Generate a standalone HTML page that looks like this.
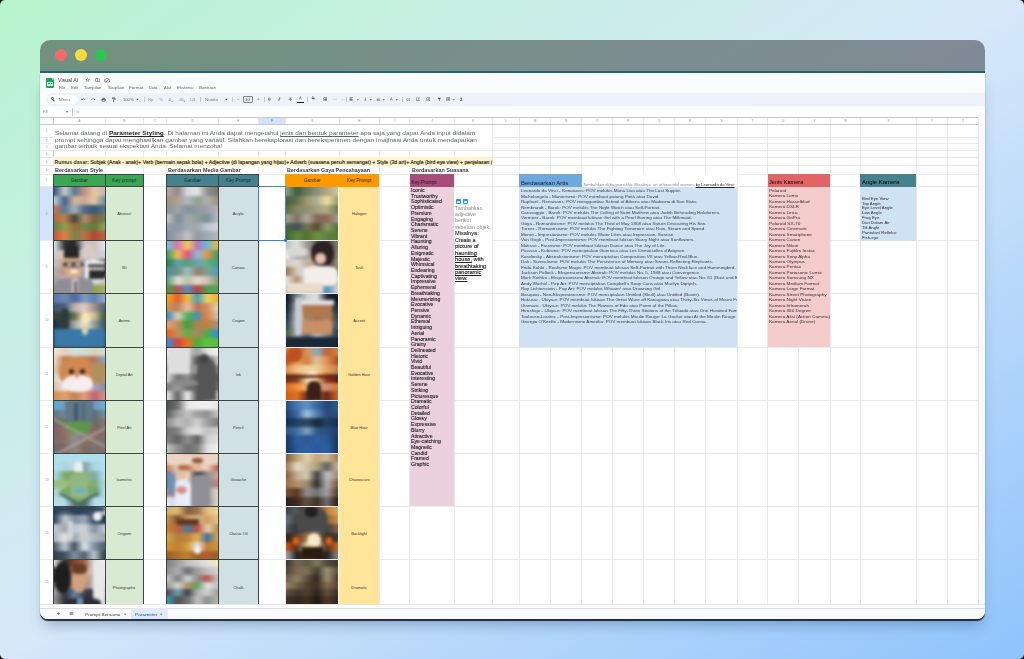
<!DOCTYPE html><html><head><meta charset="utf-8"><style>
*{margin:0;padding:0;box-sizing:border-box}
html,body{width:1024px;height:659px;overflow:hidden;background:#000}
#bg{position:absolute;left:0;top:0;width:1024px;height:659px;border-radius:5px;overflow:hidden;
 background:linear-gradient(to bottom right,#b8f5cf 0%,#d6e8f9 50%,#8fc3fc 100%)}
#bg div{position:absolute}
.t{font-family:"Liberation Sans", sans-serif;white-space:nowrap;position:absolute}
</style></head><body><div id="bg"><div style="left:40.00px;top:73.00px;width:945.00px;height:545.60px;border-radius:0 0 8px 8px;box-shadow:0 1.5px 0.8px rgba(20,30,45,.9),0 10px 14px -4px rgba(40,70,110,.35);background:#fff;overflow:hidden"></div><div style="left:40.00px;top:40.00px;width:945.00px;height:31.00px;border-radius:10px 10px 0 0;background:rgba(0,0,0,.4)"></div><div style="left:40.00px;top:71.00px;width:945.00px;height:2.00px;background:#1f6674"></div><div style="left:55.00px;top:49.20px;width:12.00px;height:12.00px;border-radius:50%;background:#f26b6b"></div><div style="left:75.00px;top:49.20px;width:12.00px;height:12.00px;border-radius:50%;background:#fcd93f"></div><div style="left:95.00px;top:49.20px;width:12.00px;height:12.00px;border-radius:50%;background:#2bc64f"></div><div style="left:40.00px;top:73.00px;width:945.00px;height:20.10px;background:#f9fbfd"></div><div style="left:40.00px;top:105.40px;width:945.00px;height:11.90px;background:linear-gradient(#f6f9fd,#fff 45%)"></div><div style="left:40.00px;top:117.30px;width:945.00px;height:7.30px;background:#fff"></div><div style="left:40.00px;top:117.30px;width:13.30px;height:7.30px;background:#f8f9fa"></div><div style="left:258.40px;top:117.30px;width:26.90px;height:7.30px;background:#d3e3fd"></div><div style="left:40.00px;top:124.60px;width:13.30px;height:479.00px;background:#fff"></div><div style="left:40.00px;top:186.50px;width:13.30px;height:54.10px;background:#d3e3fd"></div><div style="left:52.80px;top:117.30px;width:1.00px;height:486.30px;background:#eaeaea"></div><div style="left:104.60px;top:117.30px;width:1.00px;height:486.30px;background:#eaeaea"></div><div style="left:143.00px;top:117.30px;width:1.00px;height:486.30px;background:#eaeaea"></div><div style="left:166.10px;top:117.30px;width:1.00px;height:486.30px;background:#eaeaea"></div><div style="left:217.90px;top:117.30px;width:1.00px;height:486.30px;background:#eaeaea"></div><div style="left:257.90px;top:117.30px;width:1.00px;height:486.30px;background:#eaeaea"></div><div style="left:284.80px;top:117.30px;width:1.00px;height:486.30px;background:#eaeaea"></div><div style="left:338.50px;top:117.30px;width:1.00px;height:486.30px;background:#eaeaea"></div><div style="left:378.80px;top:117.30px;width:1.00px;height:486.30px;background:#eaeaea"></div><div style="left:409.40px;top:117.30px;width:1.00px;height:486.30px;background:#eaeaea"></div><div style="left:453.50px;top:117.30px;width:1.00px;height:486.30px;background:#eaeaea"></div><div style="left:491.90px;top:117.30px;width:1.00px;height:486.30px;background:#eaeaea"></div><div style="left:518.90px;top:117.30px;width:1.00px;height:486.30px;background:#eaeaea"></div><div style="left:550.10px;top:117.30px;width:1.00px;height:486.30px;background:#eaeaea"></div><div style="left:581.10px;top:117.30px;width:1.00px;height:486.30px;background:#eaeaea"></div><div style="left:612.30px;top:117.30px;width:1.00px;height:486.30px;background:#eaeaea"></div><div style="left:643.30px;top:117.30px;width:1.00px;height:486.30px;background:#eaeaea"></div><div style="left:674.00px;top:117.30px;width:1.00px;height:486.30px;background:#eaeaea"></div><div style="left:705.00px;top:117.30px;width:1.00px;height:486.30px;background:#eaeaea"></div><div style="left:736.80px;top:117.30px;width:1.00px;height:486.30px;background:#eaeaea"></div><div style="left:767.10px;top:117.30px;width:1.00px;height:486.30px;background:#eaeaea"></div><div style="left:798.10px;top:117.30px;width:1.00px;height:486.30px;background:#eaeaea"></div><div style="left:829.80px;top:117.30px;width:1.00px;height:486.30px;background:#eaeaea"></div><div style="left:859.90px;top:117.30px;width:1.00px;height:486.30px;background:#eaeaea"></div><div style="left:916.00px;top:117.30px;width:1.00px;height:486.30px;background:#eaeaea"></div><div style="left:947.00px;top:117.30px;width:1.00px;height:486.30px;background:#eaeaea"></div><div style="left:977.70px;top:117.30px;width:1.00px;height:486.30px;background:#eaeaea"></div><div style="left:40.00px;top:116.80px;width:938.20px;height:1.00px;background:#eaeaea"></div><div style="left:40.00px;top:124.10px;width:938.20px;height:1.00px;background:#eaeaea"></div><div style="left:40.00px;top:137.10px;width:938.20px;height:1.00px;background:#eaeaea"></div><div style="left:40.00px;top:143.10px;width:938.20px;height:1.00px;background:#eaeaea"></div><div style="left:40.00px;top:150.00px;width:938.20px;height:1.00px;background:#eaeaea"></div><div style="left:40.00px;top:156.80px;width:938.20px;height:1.00px;background:#eaeaea"></div><div style="left:40.00px;top:165.30px;width:938.20px;height:1.00px;background:#eaeaea"></div><div style="left:40.00px;top:173.50px;width:938.20px;height:1.00px;background:#eaeaea"></div><div style="left:40.00px;top:186.00px;width:938.20px;height:1.00px;background:#eaeaea"></div><div style="left:40.00px;top:240.10px;width:938.20px;height:1.00px;background:#eaeaea"></div><div style="left:40.00px;top:293.00px;width:938.20px;height:1.00px;background:#eaeaea"></div><div style="left:40.00px;top:346.60px;width:938.20px;height:1.00px;background:#eaeaea"></div><div style="left:40.00px;top:399.80px;width:938.20px;height:1.00px;background:#eaeaea"></div><div style="left:40.00px;top:452.50px;width:938.20px;height:1.00px;background:#eaeaea"></div><div style="left:40.00px;top:505.50px;width:938.20px;height:1.00px;background:#eaeaea"></div><div style="left:40.00px;top:559.10px;width:938.20px;height:1.00px;background:#eaeaea"></div><div style="left:40.00px;top:116.80px;width:938.20px;height:1.00px;background:#c7c7c7"></div><div style="left:40.00px;top:124.10px;width:938.20px;height:1.00px;background:#c7c7c7"></div><div style="left:52.80px;top:117.30px;width:1.00px;height:486.30px;background:#c7c7c7"></div><div class="t" style="left:53.30px;top:118.90px;width:51.80px;text-align:center;font-size:3.0px;line-height:4px;color:#8a8a8a">A</div><div class="t" style="left:105.10px;top:118.90px;width:38.40px;text-align:center;font-size:3.0px;line-height:4px;color:#8a8a8a">B</div><div class="t" style="left:143.50px;top:118.90px;width:23.10px;text-align:center;font-size:3.0px;line-height:4px;color:#8a8a8a">C</div><div class="t" style="left:166.60px;top:118.90px;width:51.80px;text-align:center;font-size:3.0px;line-height:4px;color:#8a8a8a">D</div><div class="t" style="left:218.40px;top:118.90px;width:40.00px;text-align:center;font-size:3.0px;line-height:4px;color:#8a8a8a">E</div><div class="t" style="left:258.40px;top:118.90px;width:26.90px;text-align:center;font-size:3.0px;line-height:4px;color:#0b57d0">F</div><div class="t" style="left:285.30px;top:118.90px;width:53.70px;text-align:center;font-size:3.0px;line-height:4px;color:#8a8a8a">G</div><div class="t" style="left:339.00px;top:118.90px;width:40.30px;text-align:center;font-size:3.0px;line-height:4px;color:#8a8a8a">H</div><div class="t" style="left:379.30px;top:118.90px;width:30.60px;text-align:center;font-size:3.0px;line-height:4px;color:#8a8a8a">I</div><div class="t" style="left:409.90px;top:118.90px;width:44.10px;text-align:center;font-size:3.0px;line-height:4px;color:#8a8a8a">J</div><div class="t" style="left:454.00px;top:118.90px;width:38.40px;text-align:center;font-size:3.0px;line-height:4px;color:#8a8a8a">K</div><div class="t" style="left:492.40px;top:118.90px;width:27.00px;text-align:center;font-size:3.0px;line-height:4px;color:#8a8a8a">L</div><div class="t" style="left:519.40px;top:118.90px;width:31.20px;text-align:center;font-size:3.0px;line-height:4px;color:#8a8a8a">M</div><div class="t" style="left:550.60px;top:118.90px;width:31.00px;text-align:center;font-size:3.0px;line-height:4px;color:#8a8a8a">N</div><div class="t" style="left:581.60px;top:118.90px;width:31.20px;text-align:center;font-size:3.0px;line-height:4px;color:#8a8a8a">O</div><div class="t" style="left:612.80px;top:118.90px;width:31.00px;text-align:center;font-size:3.0px;line-height:4px;color:#8a8a8a">P</div><div class="t" style="left:643.80px;top:118.90px;width:30.70px;text-align:center;font-size:3.0px;line-height:4px;color:#8a8a8a">Q</div><div class="t" style="left:674.50px;top:118.90px;width:31.00px;text-align:center;font-size:3.0px;line-height:4px;color:#8a8a8a">R</div><div class="t" style="left:705.50px;top:118.90px;width:31.80px;text-align:center;font-size:3.0px;line-height:4px;color:#8a8a8a">S</div><div class="t" style="left:737.30px;top:118.90px;width:30.30px;text-align:center;font-size:3.0px;line-height:4px;color:#8a8a8a">T</div><div class="t" style="left:767.60px;top:118.90px;width:31.00px;text-align:center;font-size:3.0px;line-height:4px;color:#8a8a8a">U</div><div class="t" style="left:798.60px;top:118.90px;width:31.70px;text-align:center;font-size:3.0px;line-height:4px;color:#8a8a8a">V</div><div class="t" style="left:830.30px;top:118.90px;width:30.10px;text-align:center;font-size:3.0px;line-height:4px;color:#8a8a8a">W</div><div class="t" style="left:860.40px;top:118.90px;width:56.10px;text-align:center;font-size:3.0px;line-height:4px;color:#8a8a8a">X</div><div class="t" style="left:916.50px;top:118.90px;width:31.00px;text-align:center;font-size:3.0px;line-height:4px;color:#8a8a8a">Y</div><div class="t" style="left:947.50px;top:118.90px;width:30.70px;text-align:center;font-size:3.0px;line-height:4px;color:#8a8a8a">Z</div><div class="t" style="left:40px;top:129.10px;width:13.3px;text-align:center;font-size:3.0px;line-height:4px;color:#8a8a8a">1</div><div class="t" style="left:40px;top:138.60px;width:13.3px;text-align:center;font-size:3.0px;line-height:4px;color:#8a8a8a">2</div><div class="t" style="left:40px;top:145.05px;width:13.3px;text-align:center;font-size:3.0px;line-height:4px;color:#8a8a8a">3</div><div class="t" style="left:40px;top:151.90px;width:13.3px;text-align:center;font-size:3.0px;line-height:4px;color:#8a8a8a">4</div><div class="t" style="left:40px;top:159.55px;width:13.3px;text-align:center;font-size:3.0px;line-height:4px;color:#8a8a8a">5</div><div class="t" style="left:40px;top:167.90px;width:13.3px;text-align:center;font-size:3.0px;line-height:4px;color:#8a8a8a">6</div><div class="t" style="left:40px;top:178.25px;width:13.3px;text-align:center;font-size:3.0px;line-height:4px;color:#8a8a8a">7</div><div class="t" style="left:40px;top:211.55px;width:13.3px;text-align:center;font-size:3.0px;line-height:4px;color:#8a8a8a">8</div><div class="t" style="left:40px;top:265.05px;width:13.3px;text-align:center;font-size:3.0px;line-height:4px;color:#8a8a8a">9</div><div class="t" style="left:40px;top:318.30px;width:13.3px;text-align:center;font-size:3.0px;line-height:4px;color:#8a8a8a">10</div><div class="t" style="left:40px;top:371.70px;width:13.3px;text-align:center;font-size:3.0px;line-height:4px;color:#8a8a8a">11</div><div class="t" style="left:40px;top:424.65px;width:13.3px;text-align:center;font-size:3.0px;line-height:4px;color:#8a8a8a">12</div><div class="t" style="left:40px;top:477.50px;width:13.3px;text-align:center;font-size:3.0px;line-height:4px;color:#8a8a8a">13</div><div class="t" style="left:40px;top:530.80px;width:13.3px;text-align:center;font-size:3.0px;line-height:4px;color:#8a8a8a">14</div><div class="t" style="left:40px;top:579.60px;width:13.3px;text-align:center;font-size:3.0px;line-height:4px;color:#8a8a8a">15</div><div style="left:53.30px;top:124.60px;width:439.10px;height:25.90px;background:#fff;"></div><div style="left:53.30px;top:157.30px;width:439.10px;height:8.50px;background:#fff2cc;"></div><div style="left:53.30px;top:165.80px;width:90.20px;height:8.20px;background:#fff;"></div><div style="left:166.60px;top:165.80px;width:91.80px;height:8.20px;background:#fff;"></div><div style="left:285.30px;top:165.80px;width:94.00px;height:8.20px;background:#fff;"></div><div style="left:409.90px;top:165.80px;width:82.50px;height:8.20px;background:#fff;"></div><div style="left:53.30px;top:174.00px;width:90.20px;height:12.50px;background:#3aa757;"></div><div style="left:105.10px;top:186.50px;width:38.40px;height:426.50px;background:#d9ead3;"></div><div style="left:166.60px;top:174.00px;width:91.80px;height:12.50px;background:#45818e;"></div><div style="left:218.40px;top:186.50px;width:40.00px;height:426.50px;background:#d0e0e3;"></div><div style="left:285.30px;top:174.00px;width:94.00px;height:12.50px;background:#ff9900;"></div><div style="left:339.00px;top:186.50px;width:40.30px;height:426.50px;background:#ffe599;"></div><div style="left:409.90px;top:174.00px;width:44.10px;height:12.50px;background:#a64d79;"></div><div style="left:409.90px;top:186.50px;width:44.10px;height:319.50px;background:#ead1dc;"></div><div style="left:454.00px;top:186.50px;width:38.40px;height:54.10px;background:#fff;"></div><div style="left:519.40px;top:174.00px;width:62.20px;height:12.50px;background:#6fa8dc;"></div><div style="left:581.60px;top:174.00px;width:155.70px;height:12.50px;background:#fff;"></div><div style="left:519.40px;top:186.50px;width:217.90px;height:160.60px;background:#cfe2f3;"></div><div style="left:767.60px;top:174.00px;width:62.70px;height:12.50px;background:#e06666;"></div><div style="left:767.60px;top:186.50px;width:62.70px;height:160.60px;background:#f4cccc;"></div><div style="left:860.40px;top:174.00px;width:56.10px;height:12.50px;background:#45818e;"></div><div style="left:860.40px;top:186.50px;width:56.10px;height:54.10px;background:#cfe2f3;"></div><div style="left:52.90px;top:174.00px;width:0.80px;height:429.60px;background:#3d4541"></div><div style="left:104.70px;top:174.00px;width:0.80px;height:429.60px;background:#3d4541"></div><div style="left:143.10px;top:174.00px;width:0.80px;height:429.60px;background:#3d4541"></div><div style="left:53.30px;top:173.60px;width:90.20px;height:0.80px;background:#3d4541"></div><div style="left:53.30px;top:186.10px;width:90.20px;height:0.80px;background:#3d4541"></div><div style="left:53.30px;top:240.20px;width:90.20px;height:0.80px;background:#3d4541"></div><div style="left:53.30px;top:293.10px;width:90.20px;height:0.80px;background:#3d4541"></div><div style="left:53.30px;top:346.70px;width:90.20px;height:0.80px;background:#3d4541"></div><div style="left:53.30px;top:399.90px;width:90.20px;height:0.80px;background:#3d4541"></div><div style="left:53.30px;top:452.60px;width:90.20px;height:0.80px;background:#3d4541"></div><div style="left:53.30px;top:505.60px;width:90.20px;height:0.80px;background:#3d4541"></div><div style="left:53.30px;top:559.20px;width:90.20px;height:0.80px;background:#3d4541"></div><div style="left:166.20px;top:174.00px;width:0.80px;height:429.60px;background:#3d4541"></div><div style="left:218.00px;top:174.00px;width:0.80px;height:429.60px;background:#3d4541"></div><div style="left:258.00px;top:174.00px;width:0.80px;height:429.60px;background:#3d4541"></div><div style="left:166.60px;top:173.60px;width:91.80px;height:0.80px;background:#3d4541"></div><div style="left:166.60px;top:186.10px;width:91.80px;height:0.80px;background:#3d4541"></div><div style="left:166.60px;top:240.20px;width:91.80px;height:0.80px;background:#3d4541"></div><div style="left:166.60px;top:293.10px;width:91.80px;height:0.80px;background:#3d4541"></div><div style="left:166.60px;top:346.70px;width:91.80px;height:0.80px;background:#3d4541"></div><div style="left:166.60px;top:399.90px;width:91.80px;height:0.80px;background:#3d4541"></div><div style="left:166.60px;top:452.60px;width:91.80px;height:0.80px;background:#3d4541"></div><div style="left:166.60px;top:505.60px;width:91.80px;height:0.80px;background:#3d4541"></div><div style="left:166.60px;top:559.20px;width:91.80px;height:0.80px;background:#3d4541"></div><div style="left:53.80px;top:187.10px;width:50.80px;height:53.20px;overflow:hidden"><div style="left:0;top:0;width:50.80px;height:53.20px;filter:blur(1.6px)"><div style="left:-4px;top:-4.00px;width:58.80px;height:13.37px;background:linear-gradient(to right,#3a5a80 4px,#3a5a80 8.3%,#c8ccd0 25.0%,#5a7890 41.7%,#c09080 58.3%,#e8c8a0 75.0%,#c8b8a8 91.7%,#c8b8a8 calc(100% - 4px))"></div><div style="left:-4px;top:8.87px;width:58.80px;height:9.37px;background:linear-gradient(to right,#c0c8d0 4px,#c0c8d0 8.3%,#40608a 25.0%,#d0b8a0 41.7%,#c8a890 58.3%,#e0c8a8 75.0%,#7890a0 91.7%,#7890a0 calc(100% - 4px))"></div><div style="left:-4px;top:17.73px;width:58.80px;height:9.37px;background:linear-gradient(to right,#c07850 4px,#c07850 8.3%,#5a7898 25.0%,#a8b0b8 41.7%,#506888 58.3%,#385878 75.0%,#5a7080 91.7%,#5a7080 calc(100% - 4px))"></div><div style="left:-4px;top:26.60px;width:58.80px;height:9.37px;background:linear-gradient(to right,#a87040 4px,#a87040 8.3%,#c08050 25.0%,#404838 41.7%,#b09070 58.3%,#806040 75.0%,#708050 91.7%,#708050 calc(100% - 4px))"></div><div style="left:-4px;top:35.47px;width:58.80px;height:9.37px;background:linear-gradient(to right,#6a8040 4px,#6a8040 8.3%,#90a050 25.0%,#a06838 41.7%,#708848 58.3%,#607838 75.0%,#90a060 91.7%,#90a060 calc(100% - 4px))"></div><div style="left:-4px;top:44.33px;width:58.80px;height:13.37px;background:linear-gradient(to right,#c85830 4px,#c85830 8.3%,#e08040 25.0%,#708850 41.7%,#c07040 58.3%,#b04830 75.0%,#c06040 91.7%,#c06040 calc(100% - 4px))"></div></div></div><div style="left:53.80px;top:241.20px;width:50.80px;height:52.00px;overflow:hidden"><div style="left:0;top:0;width:50.80px;height:52.00px;filter:blur(1.6px)"><div style="left:-4px;top:-4.00px;width:58.80px;height:13.17px;background:linear-gradient(to right,#d8e0ec 4px,#d8e0ec 8.3%,#303030 25.0%,#282828 41.7%,#c8c8d0 58.3%,#d0c0b0 75.0%,#e0e4f0 91.7%,#e0e4f0 calc(100% - 4px))"></div><div style="left:-4px;top:8.67px;width:58.80px;height:9.17px;background:linear-gradient(to right,#c8ccd8 4px,#c8ccd8 8.3%,#e0c0a0 25.0%,#c8b0a0 41.7%,#c0c0c8 58.3%,#c8c8d0 75.0%,#d0d0d8 91.7%,#d0d0d8 calc(100% - 4px))"></div><div style="left:-4px;top:17.33px;width:58.80px;height:9.17px;background:linear-gradient(to right,#c0c0c8 4px,#c0c0c8 8.3%,#d0a080 25.0%,#c89070 41.7%,#a8a8b0 58.3%,#e8e8e8 75.0%,#404040 91.7%,#404040 calc(100% - 4px))"></div><div style="left:-4px;top:26.00px;width:58.80px;height:9.17px;background:linear-gradient(to right,#b0b0b8 4px,#b0b0b8 8.3%,#c89078 25.0%,#d0a080 41.7%,#a0a0a8 58.3%,#f0f0f0 75.0%,#303030 91.7%,#303030 calc(100% - 4px))"></div><div style="left:-4px;top:34.67px;width:58.80px;height:9.17px;background:linear-gradient(to right,#a0a0a8 4px,#a0a0a8 8.3%,#b8b8c0 25.0%,#c0b8c0 41.7%,#9a9aa0 58.3%,#d0d0d0 75.0%,#c0c0c0 91.7%,#c0c0c0 calc(100% - 4px))"></div><div style="left:-4px;top:43.33px;width:58.80px;height:13.17px;background:linear-gradient(to right,#8a8a90 4px,#8a8a90 8.3%,#a0a0a8 25.0%,#806870 41.7%,#a0a0a0 58.3%,#90a050 75.0%,#a0b060 91.7%,#a0b060 calc(100% - 4px))"></div><div style="left:27.94px;top:4.16px;width:13.72px;height:12.48px;background:#d8ccc0;border-radius:50% 50% 0 0;"></div><div style="left:31.50px;top:19.76px;width:19.30px;height:19.76px;background:#f2f2f2;border-radius:1px;"></div><div style="left:35.56px;top:29.12px;width:15.24px;height:8.32px;background:#2a2a2a;border-radius:0;"></div><div style="left:34.54px;top:22.88px;width:16.26px;height:4.16px;background:#555;border-radius:0;"></div><div style="left:2.03px;top:36.40px;width:37.59px;height:15.60px;background:#8e8e94;border-radius:30% 30% 0 0;"></div><div style="left:18.29px;top:37.44px;width:6.10px;height:14.56px;background:#d8d8e0;border-radius:0;"></div><div style="left:20.32px;top:39.52px;width:2.54px;height:12.48px;background:#7a6068;border-radius:0;"></div><div style="left:10.16px;top:15.60px;width:19.30px;height:20.80px;background:#d8a888;border-radius:45%;"></div><div style="left:10.16px;top:4.16px;width:15.24px;height:12.48px;background:#262626;border-radius:35% 35% 5% 5%;"></div><div style="left:9.14px;top:20.80px;width:21.34px;height:5.20px;background:#3a3a3a;border-radius:30%;"></div><div style="left:13.21px;top:21.84px;width:5.08px;height:3.12px;background:#c8c8d0;border-radius:30%;"></div><div style="left:21.34px;top:21.84px;width:6.10px;height:3.12px;background:#c8c8d0;border-radius:30%;"></div><div style="left:16.26px;top:29.12px;width:8.13px;height:2.60px;background:#fafafa;border-radius:30%;"></div></div></div><div style="left:53.80px;top:294.10px;width:50.80px;height:52.70px;overflow:hidden"><div style="left:0;top:0;width:50.80px;height:52.70px;filter:blur(1.6px)"><div style="left:-4px;top:-4.00px;width:58.80px;height:13.28px;background:linear-gradient(to right,#5878a8 4px,#5878a8 8.3%,#7088b0 25.0%,#506898 41.7%,#8098c0 58.3%,#6080b0 75.0%,#90a8c8 91.7%,#90a8c8 calc(100% - 4px))"></div><div style="left:-4px;top:8.78px;width:58.80px;height:9.28px;background:linear-gradient(to right,#405870 4px,#405870 8.3%,#4a6080 25.0%,#c0b0b0 41.7%,#e0d0c0 58.3%,#a09090 75.0%,#506070 91.7%,#506070 calc(100% - 4px))"></div><div style="left:-4px;top:17.57px;width:58.80px;height:9.28px;background:linear-gradient(to right,#304830 4px,#304830 8.3%,#383838 25.0%,#607050 41.7%,#f0e0b0 58.3%,#d0c090 75.0%,#406040 91.7%,#406040 calc(100% - 4px))"></div><div style="left:-4px;top:26.35px;width:58.80px;height:9.28px;background:linear-gradient(to right,#203040 4px,#203040 8.3%,#404850 25.0%,#a0a8a0 41.7%,#f0e8c0 58.3%,#90a0a0 75.0%,#405860 91.7%,#405860 calc(100% - 4px))"></div><div style="left:-4px;top:35.13px;width:58.80px;height:9.28px;background:linear-gradient(to right,#204868 4px,#204868 8.3%,#3878a0 25.0%,#70a0c0 41.7%,#a0c0d0 58.3%,#4080a8 75.0%,#305878 91.7%,#305878 calc(100% - 4px))"></div><div style="left:-4px;top:43.92px;width:58.80px;height:13.28px;background:linear-gradient(to right,#1a3a58 4px,#1a3a58 8.3%,#2a5a80 25.0%,#306890 41.7%,#2a6088 58.3%,#306890 75.0%,#204868 91.7%,#204868 calc(100% - 4px))"></div><div style="left:27.43px;top:18.97px;width:9.14px;height:10.54px;background:#f4e4b8;border-radius:50%;"></div><div style="left:7.11px;top:13.70px;width:8.13px;height:23.19px;background:#2e3a3a;border-radius:30%;"></div><div style="left:0.00px;top:34.78px;width:50.80px;height:17.92px;background:#3a78a8;border-radius:0;"></div><div style="left:28.45px;top:30.57px;width:6.10px;height:10.54px;background:#d8d0b0;border-radius:40%;"></div></div></div><div style="left:53.80px;top:347.70px;width:50.80px;height:52.30px;overflow:hidden"><div style="left:0;top:0;width:50.80px;height:52.30px;filter:blur(1.6px)"><div style="left:-4px;top:-4.00px;width:58.80px;height:13.22px;background:linear-gradient(to right,#f0e0d0 4px,#f0e0d0 8.3%,#e8d0c0 25.0%,#d0e0d8 41.7%,#c8e0d8 58.3%,#e0d0b0 75.0%,#c8e0d8 91.7%,#c8e0d8 calc(100% - 4px))"></div><div style="left:-4px;top:8.72px;width:58.80px;height:9.22px;background:linear-gradient(to right,#e8d8c8 4px,#e8d8c8 8.3%,#c07848 25.0%,#d09060 41.7%,#c88050 58.3%,#b07858 75.0%,#90a0c0 91.7%,#90a0c0 calc(100% - 4px))"></div><div style="left:-4px;top:17.43px;width:58.80px;height:9.22px;background:linear-gradient(to right,#e0c8b0 4px,#e0c8b0 8.3%,#d09060 25.0%,#402820 41.7%,#d8a078 58.3%,#402820 75.0%,#d09040 91.7%,#d09040 calc(100% - 4px))"></div><div style="left:-4px;top:26.15px;width:58.80px;height:9.22px;background:linear-gradient(to right,#e0d0c0 4px,#e0d0c0 8.3%,#f0f0f0 25.0%,#f0d8d0 41.7%,#f8f0f0 58.3%,#e8e0e0 75.0%,#e09040 91.7%,#e09040 calc(100% - 4px))"></div><div style="left:-4px;top:34.87px;width:58.80px;height:9.22px;background:linear-gradient(to right,#d8c0a8 4px,#d8c0a8 8.3%,#f0e8e8 25.0%,#c89060 41.7%,#f0e0e0 58.3%,#b0a0b0 75.0%,#8090b0 91.7%,#8090b0 calc(100% - 4px))"></div><div style="left:-4px;top:43.58px;width:58.80px;height:13.22px;background:linear-gradient(to right,#d89050 4px,#d89050 8.3%,#e0a070 25.0%,#c08050 41.7%,#e0a080 58.3%,#c06070 75.0%,#d09080 91.7%,#d09080 calc(100% - 4px))"></div><div style="left:5.08px;top:10.46px;width:35.56px;height:28.76px;background:#d08850;border-radius:45%;"></div><div style="left:9.14px;top:27.20px;width:30.48px;height:16.74px;background:#f6eeee;border-radius:45%;"></div><div style="left:15.24px;top:20.92px;width:5.08px;height:5.23px;background:#2a1810;border-radius:50%;"></div><div style="left:26.42px;top:20.92px;width:5.08px;height:5.23px;background:#2a1810;border-radius:50%;"></div><div style="left:21.34px;top:27.20px;width:4.06px;height:3.14px;background:#e08090;border-radius:50%;"></div><div style="left:38.61px;top:15.69px;width:12.19px;height:20.92px;background:#b09060;border-radius:20%;"></div></div></div><div style="left:53.80px;top:400.90px;width:50.80px;height:51.80px;overflow:hidden"><div style="left:0;top:0;width:50.80px;height:51.80px;filter:blur(1.6px)"><div style="left:-4px;top:-4.00px;width:58.80px;height:13.13px;background:linear-gradient(to right,#5aa8d0 4px,#5aa8d0 8.3%,#70a0c0 25.0%,#6088a0 41.7%,#587890 58.3%,#7098b0 75.0%,#68b0d8 91.7%,#68b0d8 calc(100% - 4px))"></div><div style="left:-4px;top:8.63px;width:58.80px;height:9.13px;background:linear-gradient(to right,#607888 4px,#607888 8.3%,#708898 25.0%,#485868 41.7%,#788090 58.3%,#586878 75.0%,#7090a0 91.7%,#7090a0 calc(100% - 4px))"></div><div style="left:-4px;top:17.27px;width:58.80px;height:9.13px;background:linear-gradient(to right,#706860 4px,#706860 8.3%,#608048 25.0%,#70a850 41.7%,#80a860 58.3%,#686860 75.0%,#807870 91.7%,#807870 calc(100% - 4px))"></div><div style="left:-4px;top:25.90px;width:58.80px;height:9.13px;background:linear-gradient(to right,#8a6058 4px,#8a6058 8.3%,#907068 25.0%,#70a058 41.7%,#808878 58.3%,#906058 75.0%,#806868 91.7%,#806868 calc(100% - 4px))"></div><div style="left:-4px;top:34.53px;width:58.80px;height:9.13px;background:linear-gradient(to right,#7a6a68 4px,#7a6a68 8.3%,#8a7060 25.0%,#909090 41.7%,#8a7068 58.3%,#8a6a60 75.0%,#7a7070 91.7%,#7a7070 calc(100% - 4px))"></div><div style="left:-4px;top:43.17px;width:58.80px;height:13.13px;background:linear-gradient(to right,#6a6a70 4px,#6a6a70 8.3%,#806860 25.0%,#8a8a8a 41.7%,#806a60 58.3%,#7a7070 75.0%,#806a68 91.7%,#806a68 calc(100% - 4px))"></div><div style="left:11.18px;top:0.00px;width:28.45px;height:20.72px;background:#607888;border-radius:0;"></div><div style="left:20.32px;top:2.59px;width:4.06px;height:18.13px;background:#455565;border-radius:0;"></div><div style="left:28.45px;top:1.04px;width:3.05px;height:18.65px;background:#506878;border-radius:0;"></div><div style="left:15.24px;top:19.68px;width:21.34px;height:12.43px;background:#5a9848;border-radius:40%;"></div><div style="left:-5.08px;top:40.40px;width:60.96px;height:2.07px;background:#a8a8a8;border-radius:0;transform:rotate(-28deg)"></div><div style="left:-5.08px;top:31.08px;width:60.96px;height:1.55px;background:#a0a0a0;border-radius:0;transform:rotate(28deg)"></div></div></div><div style="left:53.80px;top:453.60px;width:50.80px;height:52.10px;overflow:hidden"><div style="left:0;top:0;width:50.80px;height:52.10px;filter:blur(1.6px)"><div style="left:-4px;top:-4.00px;width:58.80px;height:13.18px;background:linear-gradient(to right,#b0e0ee 4px,#b0e0ee 8.3%,#b0e0ee 25.0%,#b0e0ee 41.7%,#b0e0ee 58.3%,#b0e0ee 75.0%,#b0e0ee 91.7%,#b0e0ee calc(100% - 4px))"></div><div style="left:-4px;top:8.68px;width:58.80px;height:9.18px;background:linear-gradient(to right,#b0e0ee 4px,#b0e0ee 8.3%,#a8d8e0 25.0%,#c0d8e0 41.7%,#80a0a0 58.3%,#a8d8e8 75.0%,#b0e0ee 91.7%,#b0e0ee calc(100% - 4px))"></div><div style="left:-4px;top:17.37px;width:58.80px;height:9.18px;background:linear-gradient(to right,#a8d8e0 4px,#a8d8e0 8.3%,#80a870 25.0%,#78a070 41.7%,#90b880 58.3%,#80a8a0 75.0%,#b0e0ee 91.7%,#b0e0ee calc(100% - 4px))"></div><div style="left:-4px;top:26.05px;width:58.80px;height:9.18px;background:linear-gradient(to right,#90c080 4px,#90c080 8.3%,#a0c080 25.0%,#80a860 41.7%,#a0c070 58.3%,#78a870 75.0%,#a8d8e0 91.7%,#a8d8e0 calc(100% - 4px))"></div><div style="left:-4px;top:34.73px;width:58.80px;height:9.18px;background:linear-gradient(to right,#a8d8e0 4px,#a8d8e0 8.3%,#90b880 25.0%,#a0c0b0 41.7%,#80a860 58.3%,#608070 75.0%,#b0e0ee 91.7%,#b0e0ee calc(100% - 4px))"></div><div style="left:-4px;top:43.42px;width:58.80px;height:13.18px;background:linear-gradient(to right,#b0e0ee 4px,#b0e0ee 8.3%,#b0e0ee 25.0%,#607870 41.7%,#506860 58.3%,#b0e0ee 75.0%,#b0e0ee 91.7%,#b0e0ee calc(100% - 4px))"></div><div style="left:11.18px;top:26.05px;width:28.45px;height:29.18px;background:#4a6a60;border-radius:0;transform:scaleY(0.55) rotate(45deg)"></div><div style="left:11.18px;top:22.92px;width:28.45px;height:29.18px;background:#78a868;border-radius:0;transform:scaleY(0.55) rotate(45deg)"></div><div style="left:16.26px;top:20.84px;width:18.29px;height:23.97px;background:#90b880;border-radius:20%;"></div><div style="left:20.32px;top:7.29px;width:9.14px;height:11.46px;background:#e8f0f0;border-radius:50% 50% 10% 10%;"></div><div style="left:20.32px;top:34.39px;width:11.18px;height:5.21px;background:#70b0c8;border-radius:30%;"></div></div></div><div style="left:53.80px;top:506.60px;width:50.80px;height:52.70px;overflow:hidden"><div style="left:0;top:0;width:50.80px;height:52.70px;filter:blur(1.6px)"><div style="left:-4px;top:-4.00px;width:58.80px;height:13.28px;background:linear-gradient(to right,#2a4058 4px,#2a4058 8.3%,#5a6a80 25.0%,#2a4058 41.7%,#304860 58.3%,#405870 75.0%,#c0c8d0 91.7%,#c0c8d0 calc(100% - 4px))"></div><div style="left:-4px;top:8.78px;width:58.80px;height:9.28px;background:linear-gradient(to right,#304860 4px,#304860 8.3%,#c0c8d0 25.0%,#8090a0 41.7%,#a0a8b8 58.3%,#304860 75.0%,#203850 91.7%,#203850 calc(100% - 4px))"></div><div style="left:-4px;top:17.57px;width:58.80px;height:9.28px;background:linear-gradient(to right,#c0c8d0 4px,#c0c8d0 8.3%,#a0a8b0 25.0%,#c0c8d0 41.7%,#d0d4d8 58.3%,#8090a0 75.0%,#c0c8d0 91.7%,#c0c8d0 calc(100% - 4px))"></div><div style="left:-4px;top:26.35px;width:58.80px;height:9.28px;background:linear-gradient(to right,#b0b8c0 4px,#b0b8c0 8.3%,#e0e4e8 25.0%,#a0a8b0 41.7%,#c0c8d0 58.3%,#b0b8c0 75.0%,#a0a8b0 91.7%,#a0a8b0 calc(100% - 4px))"></div><div style="left:-4px;top:35.13px;width:58.80px;height:9.28px;background:linear-gradient(to right,#506070 4px,#506070 8.3%,#c0c8d0 25.0%,#405060 41.7%,#e0e4e8 58.3%,#8090a0 75.0%,#506070 91.7%,#506070 calc(100% - 4px))"></div><div style="left:-4px;top:43.92px;width:58.80px;height:13.28px;background:linear-gradient(to right,#304050 4px,#304050 8.3%,#405060 25.0%,#8090a0 41.7%,#506070 58.3%,#c0c8d0 75.0%,#304050 91.7%,#304050 calc(100% - 4px))"></div><div style="left:39.62px;top:5.27px;width:8.13px;height:9.49px;background:#f0f0f0;border-radius:50%;"></div><div style="left:0.00px;top:0.00px;width:50.80px;height:4.22px;background:#2a4058;border-radius:0;"></div><div style="left:14.22px;top:14.76px;width:5.08px;height:17.92px;background:#d0d4d8;border-radius:0;"></div><div style="left:25.40px;top:23.72px;width:11.18px;height:13.18px;background:#c8ccd0;border-radius:50%;"></div></div></div><div style="left:53.80px;top:560.20px;width:50.80px;height:43.40px;overflow:hidden"><div style="left:0;top:0;width:50.80px;height:43.40px;filter:blur(1.6px)"><div style="left:-4px;top:-4.00px;width:58.80px;height:11.73px;background:linear-gradient(to right,#d8d8d8 4px,#d8d8d8 8.3%,#303030 25.0%,#804830 41.7%,#a06040 58.3%,#e0e0e0 75.0%,#f0f0f0 91.7%,#f0f0f0 calc(100% - 4px))"></div><div style="left:-4px;top:7.23px;width:58.80px;height:7.73px;background:linear-gradient(to right,#404040 4px,#404040 8.3%,#202020 25.0%,#c09070 41.7%,#d0a080 58.3%,#c8c8c8 75.0%,#f0f0f0 91.7%,#f0f0f0 calc(100% - 4px))"></div><div style="left:-4px;top:14.47px;width:58.80px;height:7.73px;background:linear-gradient(to right,#303030 4px,#303030 8.3%,#606060 25.0%,#d0a080 41.7%,#c89070 58.3%,#b8b8b8 75.0%,#e0e0e0 91.7%,#e0e0e0 calc(100% - 4px))"></div><div style="left:-4px;top:21.70px;width:58.80px;height:7.73px;background:linear-gradient(to right,#808080 4px,#808080 8.3%,#202020 25.0%,#c0a090 41.7%,#a08070 58.3%,#c0c0c0 75.0%,#d0d0d0 91.7%,#d0d0d0 calc(100% - 4px))"></div><div style="left:-4px;top:28.93px;width:58.80px;height:7.73px;background:linear-gradient(to right,#a0a0a0 4px,#a0a0a0 8.3%,#303038 25.0%,#6080a0 41.7%,#404048 58.3%,#303038 75.0%,#b0b0b0 91.7%,#b0b0b0 calc(100% - 4px))"></div><div style="left:-4px;top:36.17px;width:58.80px;height:11.73px;background:linear-gradient(to right,#909090 4px,#909090 8.3%,#303038 25.0%,#6a90b0 41.7%,#303038 58.3%,#282830 75.0%,#a0a0a0 91.7%,#a0a0a0 calc(100% - 4px))"></div><div style="left:0.00px;top:2.11px;width:17.27px;height:30.62px;background:#1e1e1e;border-radius:50%;"></div><div style="left:39.62px;top:2.64px;width:11.18px;height:50.16px;background:#e8e8e8;border-radius:0;"></div><div style="left:18.29px;top:9.50px;width:14.22px;height:23.23px;background:#d0a080;border-radius:45%;"></div><div style="left:18.29px;top:4.22px;width:15.24px;height:9.50px;background:#6a3c24;border-radius:40%;"></div><div style="left:9.14px;top:38.02px;width:37.59px;height:14.78px;background:#2e2e36;border-radius:30% 30% 0 0;"></div><div style="left:23.37px;top:38.02px;width:6.10px;height:14.78px;background:#6890b8;border-radius:0;"></div></div></div><div style="left:167.10px;top:187.10px;width:50.80px;height:53.20px;overflow:hidden"><div style="left:0;top:0;width:50.80px;height:53.20px;filter:blur(1.6px)"><div style="left:-4px;top:-4.00px;width:58.80px;height:13.37px;background:linear-gradient(to right,#b0a8a0 4px,#b0a8a0 8.3%,#908880 25.0%,#d8dce0 41.7%,#e0e4e8 58.3%,#909090 75.0%,#807870 91.7%,#807870 calc(100% - 4px))"></div><div style="left:-4px;top:8.87px;width:58.80px;height:9.37px;background:linear-gradient(to right,#a09080 4px,#a09080 8.3%,#b0a090 25.0%,#b0b8c0 41.7%,#90a090 58.3%,#b0b0b0 75.0%,#a09080 91.7%,#a09080 calc(100% - 4px))"></div><div style="left:-4px;top:17.73px;width:58.80px;height:9.37px;background:linear-gradient(to right,#909098 4px,#909098 8.3%,#a0a4a8 25.0%,#8890a0 41.7%,#9098a0 58.3%,#a0a0a8 75.0%,#b0b0b8 91.7%,#b0b0b8 calc(100% - 4px))"></div><div style="left:-4px;top:26.60px;width:58.80px;height:9.37px;background:linear-gradient(to right,#c0c4c8 4px,#c0c4c8 8.3%,#808890 25.0%,#a0a8b0 41.7%,#90a090 58.3%,#7890a0 75.0%,#b0b8c0 91.7%,#b0b8c0 calc(100% - 4px))"></div><div style="left:-4px;top:35.47px;width:58.80px;height:9.37px;background:linear-gradient(to right,#90a0a0 4px,#90a0a0 8.3%,#8898a8 25.0%,#a0a8b0 41.7%,#a0a8b0 58.3%,#c0c8d0 75.0%,#d0d4d8 91.7%,#d0d4d8 calc(100% - 4px))"></div><div style="left:-4px;top:44.33px;width:58.80px;height:13.37px;background:linear-gradient(to right,#8090a0 4px,#8090a0 8.3%,#a0a0b0 25.0%,#c0c0c0 41.7%,#909aa0 58.3%,#a0a8b0 75.0%,#b0b8c0 91.7%,#b0b8c0 calc(100% - 4px))"></div></div></div><div style="left:167.10px;top:241.20px;width:50.80px;height:52.00px;overflow:hidden"><div style="left:0;top:0;width:50.80px;height:52.00px;filter:blur(1.6px)"><div style="left:-4px;top:-4.00px;width:58.80px;height:13.17px;background:linear-gradient(to right,#70c0d0 4px,#70c0d0 8.3%,#e070b0 25.0%,#f0d050 41.7%,#c070c0 58.3%,#60c0e0 75.0%,#f0b040 91.7%,#f0b040 calc(100% - 4px))"></div><div style="left:-4px;top:8.67px;width:58.80px;height:9.17px;background:linear-gradient(to right,#40a060 4px,#40a060 8.3%,#f0c050 25.0%,#e05080 41.7%,#80c0e0 58.3%,#f09040 75.0%,#40a060 91.7%,#40a060 calc(100% - 4px))"></div><div style="left:-4px;top:17.33px;width:58.80px;height:9.17px;background:linear-gradient(to right,#308050 4px,#308050 8.3%,#60a0b0 25.0%,#50a070 41.7%,#70a0c0 58.3%,#60b080 75.0%,#40a080 91.7%,#40a080 calc(100% - 4px))"></div><div style="left:-4px;top:26.00px;width:58.80px;height:9.17px;background:linear-gradient(to right,#5090a0 4px,#5090a0 8.3%,#709080 25.0%,#a0c0c0 41.7%,#908070 58.3%,#80a090 75.0%,#50a0b0 91.7%,#50a0b0 calc(100% - 4px))"></div><div style="left:-4px;top:34.67px;width:58.80px;height:9.17px;background:linear-gradient(to right,#60a080 4px,#60a080 8.3%,#e0e0d0 25.0%,#c0c0a0 41.7%,#e0d8d0 58.3%,#d0c0b0 75.0%,#80a080 91.7%,#80a080 calc(100% - 4px))"></div><div style="left:-4px;top:43.33px;width:58.80px;height:13.17px;background:linear-gradient(to right,#40a040 4px,#40a040 8.3%,#c05050 25.0%,#5090c0 41.7%,#c04040 58.3%,#50a050 75.0%,#60a050 91.7%,#60a050 calc(100% - 4px))"></div></div></div><div style="left:167.10px;top:294.10px;width:50.80px;height:52.70px;overflow:hidden"><div style="left:0;top:0;width:50.80px;height:52.70px;filter:blur(1.6px)"><div style="left:-4px;top:-4.00px;width:58.80px;height:13.28px;background:linear-gradient(to right,#f0a020 4px,#f0a020 8.3%,#e06030 25.0%,#f0c040 41.7%,#40a0c0 58.3%,#f0d060 75.0%,#f0b030 91.7%,#f0b030 calc(100% - 4px))"></div><div style="left:-4px;top:8.78px;width:58.80px;height:9.28px;background:linear-gradient(to right,#d09050 4px,#d09050 8.3%,#c08060 25.0%,#e0c0a0 41.7%,#c07050 58.3%,#d09060 75.0%,#e0d0b0 91.7%,#e0d0b0 calc(100% - 4px))"></div><div style="left:-4px;top:17.57px;width:58.80px;height:9.28px;background:linear-gradient(to right,#3090c0 4px,#3090c0 8.3%,#e0d0c0 25.0%,#50b050 41.7%,#4090c0 58.3%,#f08030 75.0%,#c0c0c0 91.7%,#c0c0c0 calc(100% - 4px))"></div><div style="left:-4px;top:26.35px;width:58.80px;height:9.28px;background:linear-gradient(to right,#e0a070 4px,#e0a070 8.3%,#c09060 25.0%,#40a040 41.7%,#b08050 58.3%,#c08040 75.0%,#b09070 91.7%,#b09070 calc(100% - 4px))"></div><div style="left:-4px;top:35.13px;width:58.80px;height:9.28px;background:linear-gradient(to right,#f06020 4px,#f06020 8.3%,#c09060 25.0%,#60b040 41.7%,#b08060 58.3%,#50b040 75.0%,#3090e0 91.7%,#3090e0 calc(100% - 4px))"></div><div style="left:-4px;top:43.92px;width:58.80px;height:13.28px;background:linear-gradient(to right,#3090d0 4px,#3090d0 8.3%,#e04040 25.0%,#f07020 41.7%,#40b040 58.3%,#60c040 75.0%,#50c040 91.7%,#50c040 calc(100% - 4px))"></div></div></div><div style="left:167.10px;top:347.70px;width:50.80px;height:52.30px;overflow:hidden"><div style="left:0;top:0;width:50.80px;height:52.30px;filter:blur(1.6px)"><div style="left:-4px;top:-4.00px;width:58.80px;height:13.22px;background:linear-gradient(to right,#f0f0f0 4px,#f0f0f0 8.3%,#d0d0d0 25.0%,#c8c8c8 41.7%,#a0a0a0 58.3%,#e0e0e0 75.0%,#f0f0f0 91.7%,#f0f0f0 calc(100% - 4px))"></div><div style="left:-4px;top:8.72px;width:58.80px;height:9.22px;background:linear-gradient(to right,#c0c0c0 4px,#c0c0c0 8.3%,#a0a0a0 25.0%,#d0d0d0 41.7%,#505050 58.3%,#707070 75.0%,#c0c0c0 91.7%,#c0c0c0 calc(100% - 4px))"></div><div style="left:-4px;top:17.43px;width:58.80px;height:9.22px;background:linear-gradient(to right,#909090 4px,#909090 8.3%,#b0b0b0 25.0%,#a0a0a0 41.7%,#909090 58.3%,#404040 75.0%,#808080 91.7%,#808080 calc(100% - 4px))"></div><div style="left:-4px;top:26.15px;width:58.80px;height:9.22px;background:linear-gradient(to right,#d0d0d0 4px,#d0d0d0 8.3%,#707070 25.0%,#909090 41.7%,#505050 58.3%,#303030 75.0%,#606060 91.7%,#606060 calc(100% - 4px))"></div><div style="left:-4px;top:34.87px;width:58.80px;height:9.22px;background:linear-gradient(to right,#808080 4px,#808080 8.3%,#a0a0a0 25.0%,#707070 41.7%,#606060 58.3%,#404040 75.0%,#707070 91.7%,#707070 calc(100% - 4px))"></div><div style="left:-4px;top:43.58px;width:58.80px;height:13.22px;background:linear-gradient(to right,#e0e0e0 4px,#e0e0e0 8.3%,#606060 25.0%,#f0f0f0 41.7%,#505050 58.3%,#808080 75.0%,#c0c0c0 91.7%,#c0c0c0 calc(100% - 4px))"></div><div style="left:29.46px;top:11.51px;width:19.30px;height:40.79px;background:#555555;border-radius:30% 30% 0 0;"></div><div style="left:31.50px;top:6.28px;width:10.16px;height:9.41px;background:#444444;border-radius:50%;"></div><div style="left:2.03px;top:32.43px;width:28.45px;height:6.28px;background:#8a8a8a;border-radius:40%;"></div><div style="left:0.00px;top:0.00px;width:22.86px;height:26.15px;background:#dedede;border-radius:0;"></div></div></div><div style="left:167.10px;top:400.90px;width:50.80px;height:51.80px;overflow:hidden"><div style="left:0;top:0;width:50.80px;height:51.80px;filter:blur(1.6px)"><div style="left:-4px;top:-4.00px;width:58.80px;height:13.13px;background:linear-gradient(to right,#505050 4px,#505050 8.3%,#707070 25.0%,#e8e8e8 41.7%,#f0f0f0 58.3%,#f0f0f0 75.0%,#e8e8e8 91.7%,#e8e8e8 calc(100% - 4px))"></div><div style="left:-4px;top:8.63px;width:58.80px;height:9.13px;background:linear-gradient(to right,#606060 4px,#606060 8.3%,#a0a0a0 25.0%,#c0c0c0 41.7%,#a0a0a0 58.3%,#909090 75.0%,#c0c0c0 91.7%,#c0c0c0 calc(100% - 4px))"></div><div style="left:-4px;top:17.27px;width:58.80px;height:9.13px;background:linear-gradient(to right,#909090 4px,#909090 8.3%,#c0c0c0 25.0%,#b0b0b0 41.7%,#d0d0d0 58.3%,#a0a0a0 75.0%,#808080 91.7%,#808080 calc(100% - 4px))"></div><div style="left:-4px;top:25.90px;width:58.80px;height:9.13px;background:linear-gradient(to right,#707070 4px,#707070 8.3%,#808080 25.0%,#d0d0d0 41.7%,#e0e0e0 58.3%,#c0c0c0 75.0%,#d0d0d0 91.7%,#d0d0d0 calc(100% - 4px))"></div><div style="left:-4px;top:34.53px;width:58.80px;height:9.13px;background:linear-gradient(to right,#808080 4px,#808080 8.3%,#606060 25.0%,#909090 41.7%,#606060 58.3%,#d0d0d0 75.0%,#e0e0e0 91.7%,#e0e0e0 calc(100% - 4px))"></div><div style="left:-4px;top:43.17px;width:58.80px;height:13.13px;background:linear-gradient(to right,#c0c0c0 4px,#c0c0c0 8.3%,#909090 25.0%,#707070 41.7%,#808080 58.3%,#e0e0e0 75.0%,#f0f0f0 91.7%,#f0f0f0 calc(100% - 4px))"></div></div></div><div style="left:167.10px;top:453.60px;width:50.80px;height:52.10px;overflow:hidden"><div style="left:0;top:0;width:50.80px;height:52.10px;filter:blur(1.6px)"><div style="left:-4px;top:-4.00px;width:58.80px;height:13.18px;background:linear-gradient(to right,#e8d0c0 4px,#e8d0c0 8.3%,#f0c0a0 25.0%,#e0a090 41.7%,#c08060 58.3%,#e0c0b0 75.0%,#f0c0a0 91.7%,#f0c0a0 calc(100% - 4px))"></div><div style="left:-4px;top:8.68px;width:58.80px;height:9.18px;background:linear-gradient(to right,#d08060 4px,#d08060 8.3%,#e0d0c0 25.0%,#c07050 41.7%,#f0d0b0 58.3%,#e8d0c0 75.0%,#c06050 91.7%,#c06050 calc(100% - 4px))"></div><div style="left:-4px;top:17.37px;width:58.80px;height:9.18px;background:linear-gradient(to right,#6080a0 4px,#6080a0 8.3%,#e0c0b0 25.0%,#f0e0d0 41.7%,#303030 58.3%,#909090 75.0%,#d0a090 91.7%,#d0a090 calc(100% - 4px))"></div><div style="left:-4px;top:26.05px;width:58.80px;height:9.18px;background:linear-gradient(to right,#4070a0 4px,#4070a0 8.3%,#e0e0f0 25.0%,#c0a0a0 41.7%,#f0f0f0 58.3%,#909090 75.0%,#c08080 91.7%,#c08080 calc(100% - 4px))"></div><div style="left:-4px;top:34.73px;width:58.80px;height:9.18px;background:linear-gradient(to right,#d08070 4px,#d08070 8.3%,#e08090 25.0%,#a0b0c0 41.7%,#909090 58.3%,#a0a0a0 75.0%,#e0d0c0 91.7%,#e0d0c0 calc(100% - 4px))"></div><div style="left:-4px;top:43.42px;width:58.80px;height:13.18px;background:linear-gradient(to right,#e0e8f0 4px,#e0e8f0 8.3%,#c0d0e8 25.0%,#c0d0e0 41.7%,#808080 58.3%,#909090 75.0%,#e0d0d0 91.7%,#e0d0d0 calc(100% - 4px))"></div><div style="left:0.00px;top:0.00px;width:50.80px;height:11.46px;background:#ecd4c4;border-radius:0;"></div><div style="left:8.13px;top:26.05px;width:17.27px;height:26.05px;background:#e8eef8;border-radius:40% 40% 0 0;"></div><div style="left:24.38px;top:21.88px;width:18.29px;height:30.22px;background:#8e9096;border-radius:30% 30% 0 0;"></div><div style="left:26.42px;top:7.29px;width:8.13px;height:11.46px;background:#e4b898;border-radius:45%;"></div><div style="left:25.40px;top:4.17px;width:10.16px;height:5.21px;background:#8a5838;border-radius:40%;"></div><div style="left:12.19px;top:14.59px;width:8.13px;height:10.42px;background:#e8c0a0;border-radius:45%;"></div><div style="left:11.18px;top:11.46px;width:10.16px;height:5.21px;background:#b06848;border-radius:40%;"></div><div style="left:9.14px;top:32.30px;width:11.18px;height:8.34px;background:#d89090;border-radius:50%;"></div><div style="left:0.00px;top:20.84px;width:8.13px;height:20.84px;background:#7090b0;border-radius:20%;"></div></div></div><div style="left:167.10px;top:506.60px;width:50.80px;height:52.70px;overflow:hidden"><div style="left:0;top:0;width:50.80px;height:52.70px;filter:blur(1.6px)"><div style="left:-4px;top:-4.00px;width:58.80px;height:13.28px;background:linear-gradient(to right,#d0b070 4px,#d0b070 8.3%,#e0b870 25.0%,#806040 41.7%,#a07050 58.3%,#e0c080 75.0%,#f0d090 91.7%,#f0d090 calc(100% - 4px))"></div><div style="left:-4px;top:8.78px;width:58.80px;height:9.28px;background:linear-gradient(to right,#c09050 4px,#c09050 8.3%,#805030 25.0%,#e0a060 41.7%,#d0b080 58.3%,#d0a060 75.0%,#e0c080 91.7%,#e0c080 calc(100% - 4px))"></div><div style="left:-4px;top:17.57px;width:58.80px;height:9.28px;background:linear-gradient(to right,#c08040 4px,#c08040 8.3%,#c06030 25.0%,#4080a0 41.7%,#c05040 58.3%,#e0d0b0 75.0%,#c09050 91.7%,#c09050 calc(100% - 4px))"></div><div style="left:-4px;top:26.35px;width:58.80px;height:9.28px;background:linear-gradient(to right,#d0a040 4px,#d0a040 8.3%,#b08040 25.0%,#c08040 41.7%,#e0b050 58.3%,#4070a0 75.0%,#d0a050 91.7%,#d0a050 calc(100% - 4px))"></div><div style="left:-4px;top:35.13px;width:58.80px;height:9.28px;background:linear-gradient(to right,#d09030 4px,#d09030 8.3%,#c08030 25.0%,#d0a040 41.7%,#e0e0e0 58.3%,#c08030 75.0%,#d09040 91.7%,#d09040 calc(100% - 4px))"></div><div style="left:-4px;top:43.92px;width:58.80px;height:13.28px;background:linear-gradient(to right,#a06020 4px,#a06020 8.3%,#b07030 25.0%,#c08030 41.7%,#a06020 58.3%,#b06030 75.0%,#a06020 91.7%,#a06020 calc(100% - 4px))"></div><div style="left:26.42px;top:39.00px;width:7.11px;height:8.43px;background:#f0f0f0;border-radius:50%;"></div><div style="left:10.16px;top:12.65px;width:21.34px;height:5.27px;background:#603820;border-radius:20%;"></div></div></div><div style="left:167.10px;top:560.20px;width:50.80px;height:43.40px;overflow:hidden"><div style="left:0;top:0;width:50.80px;height:43.40px;filter:blur(1.6px)"><div style="left:-4px;top:-4.00px;width:58.80px;height:11.73px;background:linear-gradient(to right,#808080 4px,#808080 8.3%,#a0a0a0 25.0%,#c0c0c0 41.7%,#d0d0d0 58.3%,#e0e0e0 75.0%,#f0e8c0 91.7%,#f0e8c0 calc(100% - 4px))"></div><div style="left:-4px;top:7.23px;width:58.80px;height:7.73px;background:linear-gradient(to right,#909090 4px,#909090 8.3%,#b0b0b0 25.0%,#707070 41.7%,#a0a0a0 58.3%,#c0c0c0 75.0%,#d0d0d0 91.7%,#d0d0d0 calc(100% - 4px))"></div><div style="left:-4px;top:14.47px;width:58.80px;height:7.73px;background:linear-gradient(to right,#c0c0c0 4px,#c0c0c0 8.3%,#808080 25.0%,#d0d0d0 41.7%,#909090 58.3%,#c05050 75.0%,#c0c0c0 91.7%,#c0c0c0 calc(100% - 4px))"></div><div style="left:-4px;top:21.70px;width:58.80px;height:7.73px;background:linear-gradient(to right,#a0a0a0 4px,#a0a0a0 8.3%,#d0d0d0 25.0%,#b09060 41.7%,#60a060 58.3%,#e0e0e0 75.0%,#c0c0c0 91.7%,#c0c0c0 calc(100% - 4px))"></div><div style="left:-4px;top:28.93px;width:58.80px;height:7.73px;background:linear-gradient(to right,#505050 4px,#505050 8.3%,#70a0b0 25.0%,#404040 41.7%,#b0b0b0 58.3%,#d0d0d0 75.0%,#a0a0a0 91.7%,#a0a0a0 calc(100% - 4px))"></div><div style="left:-4px;top:36.17px;width:58.80px;height:11.73px;background:linear-gradient(to right,#4090b0 4px,#4090b0 8.3%,#505050 25.0%,#707070 41.7%,#c0c0c0 58.3%,#909090 75.0%,#b0b0b0 91.7%,#b0b0b0 calc(100% - 4px))"></div></div></div><div style="left:285.80px;top:187.10px;width:52.70px;height:53.20px;overflow:hidden"><div style="left:0;top:0;width:52.70px;height:53.20px;filter:blur(1.6px)"><div style="left:-4px;top:-4.00px;width:60.70px;height:13.37px;background:linear-gradient(to right,#8a9a80 4px,#8a9a80 8.3%,#405a40 25.0%,#6a7860 41.7%,#8a9080 58.3%,#b0a880 75.0%,#c8c0a0 91.7%,#c8c0a0 calc(100% - 4px))"></div><div style="left:-4px;top:8.87px;width:60.70px;height:9.37px;background:linear-gradient(to right,#4a6040 4px,#4a6040 8.3%,#607050 25.0%,#a09870 41.7%,#b0b090 58.3%,#f0e0a0 75.0%,#a0a070 91.7%,#a0a070 calc(100% - 4px))"></div><div style="left:-4px;top:17.73px;width:60.70px;height:9.37px;background:linear-gradient(to right,#607040 4px,#607040 8.3%,#808a60 25.0%,#909070 41.7%,#a0a080 58.3%,#b0b080 75.0%,#708050 91.7%,#708050 calc(100% - 4px))"></div><div style="left:-4px;top:26.60px;width:60.70px;height:9.37px;background:linear-gradient(to right,#a0a090 4px,#a0a090 8.3%,#807060 25.0%,#b0a8a0 41.7%,#806858 58.3%,#906a58 75.0%,#a09888 91.7%,#a09888 calc(100% - 4px))"></div><div style="left:-4px;top:35.47px;width:60.70px;height:9.37px;background:linear-gradient(to right,#506838 4px,#506838 8.3%,#405060 25.0%,#707850 41.7%,#604838 58.3%,#80a060 75.0%,#607040 91.7%,#607040 calc(100% - 4px))"></div><div style="left:-4px;top:44.33px;width:60.70px;height:13.37px;background:linear-gradient(to right,#406830 4px,#406830 8.3%,#608838 25.0%,#507030 41.7%,#709040 58.3%,#608040 75.0%,#508030 91.7%,#508030 calc(100% - 4px))"></div></div></div><div style="left:285.80px;top:241.20px;width:52.70px;height:52.00px;overflow:hidden"><div style="left:0;top:0;width:52.70px;height:52.00px;filter:blur(1.6px)"><div style="left:-4px;top:-4.00px;width:60.70px;height:13.17px;background:linear-gradient(to right,#c0c0c0 4px,#c0c0c0 8.3%,#e0e0e0 25.0%,#a09890 41.7%,#606870 58.3%,#404040 75.0%,#807870 91.7%,#807870 calc(100% - 4px))"></div><div style="left:-4px;top:8.67px;width:60.70px;height:9.17px;background:linear-gradient(to right,#f0f0f0 4px,#f0f0f0 8.3%,#909090 25.0%,#b0a8a0 41.7%,#d0b0a0 58.3%,#302828 75.0%,#908070 91.7%,#908070 calc(100% - 4px))"></div><div style="left:-4px;top:17.33px;width:60.70px;height:9.17px;background:linear-gradient(to right,#d0c8c0 4px,#d0c8c0 8.3%,#e0d8d0 25.0%,#c0b0a0 41.7%,#d0a090 58.3%,#302020 75.0%,#a09080 91.7%,#a09080 calc(100% - 4px))"></div><div style="left:-4px;top:26.00px;width:60.70px;height:9.17px;background:linear-gradient(to right,#a07850 4px,#a07850 8.3%,#d0c8c0 25.0%,#e0e0e0 41.7%,#f0f0f0 58.3%,#e8e4e0 75.0%,#706050 91.7%,#706050 calc(100% - 4px))"></div><div style="left:-4px;top:34.67px;width:60.70px;height:9.17px;background:linear-gradient(to right,#e0e0e0 4px,#e0e0e0 8.3%,#b09070 25.0%,#f0f0f0 41.7%,#e0d8d0 58.3%,#f0f0f0 75.0%,#c0c0c0 91.7%,#c0c0c0 calc(100% - 4px))"></div><div style="left:-4px;top:43.33px;width:60.70px;height:13.17px;background:linear-gradient(to right,#c0a080 4px,#c0a080 8.3%,#e0d8d0 25.0%,#d0b090 41.7%,#d0c0b0 58.3%,#5090c0 75.0%,#d0d0d0 91.7%,#d0d0d0 calc(100% - 4px))"></div><div style="left:25.30px;top:0.00px;width:23.19px;height:24.96px;background:#2c2020;border-radius:45%;"></div><div style="left:17.92px;top:24.96px;width:34.78px;height:19.76px;background:#f2eeea;border-radius:30%;"></div><div style="left:29.51px;top:11.44px;width:10.54px;height:11.44px;background:#e8c0a8;border-radius:45%;"></div><div style="left:0.00px;top:6.24px;width:21.08px;height:9.36px;background:#d8d8d8;border-radius:40%;"></div><div style="left:0.00px;top:41.60px;width:36.89px;height:10.40px;background:#e8dccc;border-radius:0;"></div></div></div><div style="left:285.80px;top:294.10px;width:52.70px;height:52.70px;overflow:hidden"><div style="left:0;top:0;width:52.70px;height:52.70px;filter:blur(1.6px)"><div style="left:-4px;top:-4.00px;width:60.70px;height:13.28px;background:linear-gradient(to right,#101828 4px,#101828 8.3%,#708090 25.0%,#d0d0d0 41.7%,#e0e0e0 58.3%,#202838 75.0%,#101828 91.7%,#101828 calc(100% - 4px))"></div><div style="left:-4px;top:8.78px;width:60.70px;height:9.28px;background:linear-gradient(to right,#182030 4px,#182030 8.3%,#a0a8b0 25.0%,#b08060 41.7%,#e0d0c0 58.3%,#905030 75.0%,#203040 91.7%,#203040 calc(100% - 4px))"></div><div style="left:-4px;top:17.57px;width:60.70px;height:9.28px;background:linear-gradient(to right,#203040 4px,#203040 8.3%,#c0c0c0 25.0%,#d0a080 41.7%,#606060 58.3%,#c08050 75.0%,#304050 91.7%,#304050 calc(100% - 4px))"></div><div style="left:-4px;top:26.35px;width:60.70px;height:9.28px;background:linear-gradient(to right,#304050 4px,#304050 8.3%,#c0c8c8 25.0%,#a07050 41.7%,#c09060 58.3%,#d0a070 75.0%,#405060 91.7%,#405060 calc(100% - 4px))"></div><div style="left:-4px;top:35.13px;width:60.70px;height:9.28px;background:linear-gradient(to right,#506040 4px,#506040 8.3%,#a0a8a0 25.0%,#606060 41.7%,#c0c0c0 58.3%,#808080 75.0%,#304050 91.7%,#304050 calc(100% - 4px))"></div><div style="left:-4px;top:43.92px;width:60.70px;height:13.28px;background:linear-gradient(to right,#203040 4px,#203040 8.3%,#304050 25.0%,#404858 41.7%,#303848 58.3%,#202838 75.0%,#101828 91.7%,#101828 calc(100% - 4px))"></div><div style="left:9.49px;top:4.22px;width:6.32px;height:36.89px;background:#c8ccd0;border-radius:0;"></div><div style="left:15.81px;top:6.32px;width:32.67px;height:4.22px;background:#e0e0e0;border-radius:0;"></div><div style="left:16.86px;top:10.54px;width:29.51px;height:14.76px;background:#b07850;border-radius:0;"></div><div style="left:16.86px;top:27.40px;width:29.51px;height:12.65px;background:#c89068;border-radius:0;"></div><div style="left:0.00px;top:43.21px;width:52.70px;height:9.49px;background:#182838;border-radius:0;"></div></div></div><div style="left:285.80px;top:347.70px;width:52.70px;height:52.30px;overflow:hidden"><div style="left:0;top:0;width:52.70px;height:52.30px;filter:blur(1.6px)"><div style="left:-4px;top:-4.00px;width:60.70px;height:13.22px;background:linear-gradient(to right,#e09050 4px,#e09050 8.3%,#b06030 25.0%,#e09050 41.7%,#80b0c0 58.3%,#c06030 75.0%,#d08040 91.7%,#d08040 calc(100% - 4px))"></div><div style="left:-4px;top:8.72px;width:60.70px;height:9.22px;background:linear-gradient(to right,#c05020 4px,#c05020 8.3%,#e0a060 25.0%,#d08040 41.7%,#e0c0a0 58.3%,#e09050 75.0%,#b05020 91.7%,#b05020 calc(100% - 4px))"></div><div style="left:-4px;top:17.43px;width:60.70px;height:9.22px;background:linear-gradient(to right,#e09050 4px,#e09050 8.3%,#f0c080 25.0%,#f0d0a0 41.7%,#f0d090 58.3%,#e0a060 75.0%,#d08050 91.7%,#d08050 calc(100% - 4px))"></div><div style="left:-4px;top:26.15px;width:60.70px;height:9.22px;background:linear-gradient(to right,#703020 4px,#703020 8.3%,#804020 25.0%,#f0e0a0 41.7%,#f0c070 58.3%,#903020 75.0%,#602010 91.7%,#602010 calc(100% - 4px))"></div><div style="left:-4px;top:34.87px;width:60.70px;height:9.22px;background:linear-gradient(to right,#e07020 4px,#e07020 8.3%,#f09040 25.0%,#f0b070 41.7%,#d0a080 58.3%,#d09070 75.0%,#e07030 91.7%,#e07030 calc(100% - 4px))"></div><div style="left:-4px;top:43.58px;width:60.70px;height:13.22px;background:linear-gradient(to right,#d06010 4px,#d06010 8.3%,#e07020 25.0%,#703020 41.7%,#a06040 58.3%,#602818 75.0%,#d06020 91.7%,#d06020 calc(100% - 4px))"></div><div style="left:21.08px;top:23.53px;width:11.59px;height:10.98px;background:#fff0c0;border-radius:50%;"></div><div style="left:0.00px;top:27.20px;width:52.70px;height:3.14px;background:#602818;border-radius:0;"></div><div style="left:21.08px;top:33.47px;width:13.70px;height:18.83px;background:#3a2018;border-radius:40% 40% 0 0;"></div><div style="left:0.00px;top:0.00px;width:15.81px;height:14.64px;background:#c05020;border-radius:40%;"></div></div></div><div style="left:285.80px;top:400.90px;width:52.70px;height:51.80px;overflow:hidden"><div style="left:0;top:0;width:52.70px;height:51.80px;filter:blur(1.6px)"><div style="left:-4px;top:-4.00px;width:60.70px;height:13.13px;background:linear-gradient(to right,#2a5080 4px,#2a5080 8.3%,#4878b0 25.0%,#6090c0 41.7%,#3a68a0 58.3%,#204878 75.0%,#2a5888 91.7%,#2a5888 calc(100% - 4px))"></div><div style="left:-4px;top:8.63px;width:60.70px;height:9.13px;background:linear-gradient(to right,#204070 4px,#204070 8.3%,#3868a0 25.0%,#a0c0e0 41.7%,#5080b0 58.3%,#284878 75.0%,#2a5080 91.7%,#2a5080 calc(100% - 4px))"></div><div style="left:-4px;top:17.27px;width:60.70px;height:9.13px;background:linear-gradient(to right,#183050 4px,#183050 8.3%,#204060 25.0%,#304860 41.7%,#182840 58.3%,#284060 75.0%,#183050 91.7%,#183050 calc(100% - 4px))"></div><div style="left:-4px;top:25.90px;width:60.70px;height:9.13px;background:linear-gradient(to right,#305880 4px,#305880 8.3%,#4070a0 25.0%,#80a0c0 41.7%,#305880 58.3%,#2a5080 75.0%,#204070 91.7%,#204070 calc(100% - 4px))"></div><div style="left:-4px;top:34.53px;width:60.70px;height:9.13px;background:linear-gradient(to right,#1a3a60 4px,#1a3a60 8.3%,#3060a0 25.0%,#2a5890 41.7%,#3060a0 58.3%,#2a5890 75.0%,#1a3a60 91.7%,#1a3a60 calc(100% - 4px))"></div><div style="left:-4px;top:43.17px;width:60.70px;height:13.13px;background:linear-gradient(to right,#183860 4px,#183860 8.3%,#2858a0 25.0%,#3060a0 41.7%,#2858a0 58.3%,#3060a0 75.0%,#183860 91.7%,#183860 calc(100% - 4px))"></div></div></div><div style="left:285.80px;top:453.60px;width:52.70px;height:52.10px;overflow:hidden"><div style="left:0;top:0;width:52.70px;height:52.10px;filter:blur(1.6px)"><div style="left:-4px;top:-4.00px;width:60.70px;height:13.18px;background:linear-gradient(to right,#806040 4px,#806040 8.3%,#c0a070 25.0%,#e0d0b0 41.7%,#c0a880 58.3%,#d0b890 75.0%,#a08060 91.7%,#a08060 calc(100% - 4px))"></div><div style="left:-4px;top:8.68px;width:60.70px;height:9.18px;background:linear-gradient(to right,#a08060 4px,#a08060 8.3%,#e0d8c0 25.0%,#d0c0a0 41.7%,#b0a080 58.3%,#606060 75.0%,#c0b090 91.7%,#c0b090 calc(100% - 4px))"></div><div style="left:-4px;top:17.37px;width:60.70px;height:9.18px;background:linear-gradient(to right,#906040 4px,#906040 8.3%,#c0b090 25.0%,#d0c8b0 41.7%,#404040 58.3%,#c0c0c0 75.0%,#a09070 91.7%,#a09070 calc(100% - 4px))"></div><div style="left:-4px;top:26.05px;width:60.70px;height:9.18px;background:linear-gradient(to right,#a07050 4px,#a07050 8.3%,#b09070 25.0%,#a09070 41.7%,#303030 58.3%,#b0b0b0 75.0%,#806040 91.7%,#806040 calc(100% - 4px))"></div><div style="left:-4px;top:34.73px;width:60.70px;height:9.18px;background:linear-gradient(to right,#705030 4px,#705030 8.3%,#603820 25.0%,#909090 41.7%,#707070 58.3%,#a0a0a0 75.0%,#604030 91.7%,#604030 calc(100% - 4px))"></div><div style="left:-4px;top:43.42px;width:60.70px;height:13.18px;background:linear-gradient(to right,#302018 4px,#302018 8.3%,#402820 25.0%,#605040 41.7%,#403028 58.3%,#707070 75.0%,#302018 91.7%,#302018 calc(100% - 4px))"></div></div></div><div style="left:285.80px;top:506.60px;width:52.70px;height:52.70px;overflow:hidden"><div style="left:0;top:0;width:52.70px;height:52.70px;filter:blur(1.6px)"><div style="left:-4px;top:-4.00px;width:60.70px;height:13.28px;background:linear-gradient(to right,#404850 4px,#404850 8.3%,#505860 25.0%,#303030 41.7%,#605040 58.3%,#c08040 75.0%,#e0a050 91.7%,#e0a050 calc(100% - 4px))"></div><div style="left:-4px;top:8.78px;width:60.70px;height:9.28px;background:linear-gradient(to right,#607080 4px,#607080 8.3%,#404040 25.0%,#606060 41.7%,#707070 58.3%,#806040 75.0%,#d09040 91.7%,#d09040 calc(100% - 4px))"></div><div style="left:-4px;top:17.57px;width:60.70px;height:9.28px;background:linear-gradient(to right,#505860 4px,#505860 8.3%,#303030 25.0%,#505050 41.7%,#606060 58.3%,#404040 75.0%,#806040 91.7%,#806040 calc(100% - 4px))"></div><div style="left:-4px;top:26.35px;width:60.70px;height:9.28px;background:linear-gradient(to right,#302820 4px,#302820 8.3%,#604030 25.0%,#a07040 41.7%,#806040 58.3%,#403020 75.0%,#403838 91.7%,#403838 calc(100% - 4px))"></div><div style="left:-4px;top:35.13px;width:60.70px;height:9.28px;background:linear-gradient(to right,#c05010 4px,#c05010 8.3%,#503020 25.0%,#e0d0a0 41.7%,#d0c090 58.3%,#503020 75.0%,#d06020 91.7%,#d06020 calc(100% - 4px))"></div><div style="left:-4px;top:43.92px;width:60.70px;height:13.28px;background:linear-gradient(to right,#a0a0a0 4px,#a0a0a0 8.3%,#202020 25.0%,#604020 41.7%,#503020 58.3%,#202020 75.0%,#808080 91.7%,#808080 calc(100% - 4px))"></div><div style="left:21.08px;top:26.35px;width:13.70px;height:13.70px;background:#f4e8c8;border-radius:50%;"></div><div style="left:7.38px;top:30.57px;width:6.32px;height:7.38px;background:#e86010;border-radius:50%;"></div><div style="left:40.05px;top:30.57px;width:6.32px;height:7.38px;background:#e86010;border-radius:50%;"></div><div style="left:11.59px;top:0.00px;width:29.51px;height:24.24px;background:#4a4a4a;border-radius:40% 40% 0 0;"></div><div style="left:18.97px;top:0.00px;width:13.70px;height:10.54px;background:#202020;border-radius:40%;"></div><div style="left:15.81px;top:40.05px;width:21.08px;height:12.65px;background:#2a1a10;border-radius:0;"></div></div></div><div style="left:285.80px;top:560.20px;width:52.70px;height:43.40px;overflow:hidden"><div style="left:0;top:0;width:52.70px;height:43.40px;filter:blur(1.6px)"><div style="left:-4px;top:-4.00px;width:60.70px;height:11.73px;background:linear-gradient(to right,#403830 4px,#403830 8.3%,#706850 25.0%,#605848 41.7%,#807860 58.3%,#504838 75.0%,#403828 91.7%,#403828 calc(100% - 4px))"></div><div style="left:-4px;top:7.23px;width:60.70px;height:7.73px;background:linear-gradient(to right,#504838 4px,#504838 8.3%,#806850 25.0%,#807050 41.7%,#404030 58.3%,#a09070 75.0%,#605040 91.7%,#605040 calc(100% - 4px))"></div><div style="left:-4px;top:14.47px;width:60.70px;height:7.73px;background:linear-gradient(to right,#706050 4px,#706050 8.3%,#908060 25.0%,#605040 41.7%,#302820 58.3%,#a09070 75.0%,#504030 91.7%,#504030 calc(100% - 4px))"></div><div style="left:-4px;top:21.70px;width:60.70px;height:7.73px;background:linear-gradient(to right,#908068 4px,#908068 8.3%,#706048 25.0%,#504030 41.7%,#403020 58.3%,#806850 75.0%,#604838 91.7%,#604838 calc(100% - 4px))"></div><div style="left:-4px;top:28.93px;width:60.70px;height:7.73px;background:linear-gradient(to right,#605040 4px,#605040 8.3%,#403828 25.0%,#504030 41.7%,#302418 58.3%,#605040 75.0%,#403020 91.7%,#403020 calc(100% - 4px))"></div><div style="left:-4px;top:36.17px;width:60.70px;height:11.73px;background:linear-gradient(to right,#403020 4px,#403020 8.3%,#302820 25.0%,#403020 41.7%,#201810 58.3%,#503828 75.0%,#302820 91.7%,#302820 calc(100% - 4px))"></div></div></div><div style="left:258.10px;top:186.20px;width:27.50px;height:54.70px;border:0.9px solid #3b82f0"></div><div style="left:283.90px;top:239.20px;width:2.80px;height:2.80px;border-radius:50%;background:#1a73e8"></div><div style="left:978.20px;top:117.30px;width:6.80px;height:486.30px;background:#f8f9fa;border-left:0.5px solid #e6e6e6"></div><div style="left:40.00px;top:603.60px;width:945.00px;height:4.40px;background:#fff;border-top:0.5px solid #e6e6e6"></div><div style="left:40.00px;top:608.00px;width:945.00px;height:10.60px;background:#f8f9fa;border-top:0.5px solid #dadce0;border-radius:0 0 8px 8px"></div><div class="t" style="left:54.60px;top:131.19px;font-size:5.80px;line-height:5.80px;color:#5f6368;transform-origin:0 0;transform:scaleX(1.1145);"><span style="font-weight:400;">Selamat datang di </span><span style="font-weight:700;text-decoration:underline;text-decoration-thickness:0.5px;text-underline-offset:0.6px;color:#222">Parameter Styling</span><span style="font-weight:400;">. Di halaman ini Anda dapat mengetahui </span><span style="font-weight:400;text-decoration:underline;text-decoration-thickness:0.5px;text-underline-offset:0.6px">jenis dan bentuk parameter</span><span style="font-weight:400;"> apa saja yang dapat Anda input didalam</span></div><div class="t" style="left:54.60px;top:137.69px;font-size:5.80px;line-height:5.80px;color:#5f6368;transform-origin:0 0;transform:scaleX(1.1219);"><span style="font-weight:400;">prompt sehingga dapat menghasilkan gambar yang variatif. Silahkan bereksplorasi dan bereksperimen dengan imajinasi Anda untuk mendapatkan</span></div><div class="t" style="left:54.60px;top:143.79px;font-size:5.80px;line-height:5.80px;color:#5f6368;transform-origin:0 0;transform:scaleX(1.0978);"><span style="font-weight:400;">gambar terbaik sesuai ekspektasi Anda. Selamat mencoba!</span></div><div style="left:53.30px;top:157.30px;width:439.10px;height:8.50px;overflow:hidden"><div class="t" style="left:1.30px;top:2.83px;font-size:5.16px;line-height:5.16px;color:#3b3526;transform-origin:0 0;transform:scaleX(1.0000);"><span style="font-weight:700;">Rumus dasar</span><span style="font-weight:400;-webkit-text-stroke:0.2px #3b3526">: Subjek (Anak - anak)+ Verb (bermain sepak bola) + Adjective (di lapangan yang hijau)+ Adverb (suasana penuh semangat) + Style (3d art)+ Angle (bird eye view) + penjelasan (lighting)</span></div></div><div class="t" style="left:54.60px;top:168.10px;font-size:5.20px;line-height:5.20px;color:#3a3a3a;transform-origin:0 0;transform:scaleX(1.0622);"><span style="font-weight:700;">Berdasarkan Style</span></div><div class="t" style="left:168.00px;top:168.10px;font-size:5.20px;line-height:5.20px;color:#3a3a3a;transform-origin:0 0;transform:scaleX(1.0613);"><span style="font-weight:700;">Berdasarkan Media Gambar</span></div><div class="t" style="left:286.90px;top:168.10px;font-size:5.20px;line-height:5.20px;color:#3a3a3a;transform-origin:0 0;transform:scaleX(1.0342);"><span style="font-weight:700;">Berdasarkan Gaya Pencahayaan</span></div><div class="t" style="left:411.60px;top:168.10px;font-size:5.20px;line-height:5.20px;color:#3a3a3a;transform-origin:0 0;transform:scaleX(1.0416);"><span style="font-weight:700;">Berdasarkan Suasana</span></div><div class="t" style="left:70.71px;top:178.72px;font-size:4.70px;line-height:4.70px;color:#1f2a22;transform-origin:0 0;transform:scaleX(1.0000);"><span style="font-weight:400;">Gambar</span></div><div class="t" style="left:112.28px;top:178.72px;font-size:4.70px;line-height:4.70px;color:#1f2a22;transform-origin:0 0;transform:scaleX(1.0000);"><span style="font-weight:400;">Key prompt</span></div><div class="t" style="left:184.01px;top:178.72px;font-size:4.70px;line-height:4.70px;color:#1f2a22;transform-origin:0 0;transform:scaleX(1.0000);"><span style="font-weight:400;">Gambar</span></div><div class="t" style="left:226.12px;top:178.72px;font-size:4.70px;line-height:4.70px;color:#1f2a22;transform-origin:0 0;transform:scaleX(1.0000);"><span style="font-weight:400;">Key Prompt</span></div><div class="t" style="left:303.66px;top:178.72px;font-size:4.70px;line-height:4.70px;color:#1f2a22;transform-origin:0 0;transform:scaleX(1.0000);"><span style="font-weight:400;">Gambar</span></div><div class="t" style="left:346.87px;top:178.72px;font-size:4.70px;line-height:4.70px;color:#1f2a22;transform-origin:0 0;transform:scaleX(1.0000);"><span style="font-weight:400;">Key Prompt</span></div><div class="t" style="left:411.20px;top:181.14px;font-size:4.80px;line-height:4.80px;color:#2a1020;transform-origin:0 0;transform:scaleX(1.0000);"><span style="font-weight:400;">Key Prompt</span></div><div class="t" style="left:520.80px;top:180.22px;font-size:6.00px;line-height:6.00px;color:#10202a;transform-origin:0 0;transform:scaleX(0.9989);"><span style="font-weight:400;">Berdasarkan Artis</span></div><div class="t" style="left:769.00px;top:180.29px;font-size:5.80px;line-height:5.80px;color:#100000;transform-origin:0 0;transform:scaleX(0.9673);"><span style="font-weight:400;">Jenis Kamera</span></div><div class="t" style="left:862.10px;top:180.29px;font-size:5.80px;line-height:5.80px;color:#000;transform-origin:0 0;transform:scaleX(1.0231);"><span style="font-weight:400;">Angle Kamera</span></div><div class="t" style="left:117.15px;top:212.45px;font-size:3.90px;line-height:3.90px;color:#333;transform-origin:0 0;transform:scaleX(1.0000);"><span style="font-weight:400;">Abstract</span></div><div class="t" style="left:232.66px;top:212.45px;font-size:3.90px;line-height:3.90px;color:#333;transform-origin:0 0;transform:scaleX(1.0000);"><span style="font-weight:400;">Acrylic</span></div><div class="t" style="left:351.89px;top:212.45px;font-size:3.90px;line-height:3.90px;color:#333;transform-origin:0 0;transform:scaleX(1.0000);"><span style="font-weight:400;">Halogen</span></div><div class="t" style="left:121.81px;top:265.95px;font-size:3.90px;line-height:3.90px;color:#333;transform-origin:0 0;transform:scaleX(1.0000);"><span style="font-weight:400;">3D</span></div><div class="t" style="left:231.79px;top:265.95px;font-size:3.90px;line-height:3.90px;color:#333;transform-origin:0 0;transform:scaleX(1.0000);"><span style="font-weight:400;">Canvas</span></div><div class="t" style="left:355.14px;top:265.95px;font-size:3.90px;line-height:3.90px;color:#333;transform-origin:0 0;transform:scaleX(1.0000);"><span style="font-weight:400;">Task</span></div><div class="t" style="left:118.77px;top:319.20px;font-size:3.90px;line-height:3.90px;color:#333;transform-origin:0 0;transform:scaleX(1.0000);"><span style="font-weight:400;">Anime</span></div><div class="t" style="left:232.11px;top:319.20px;font-size:3.90px;line-height:3.90px;color:#333;transform-origin:0 0;transform:scaleX(1.0000);"><span style="font-weight:400;">Crayon</span></div><div class="t" style="left:353.19px;top:319.20px;font-size:3.90px;line-height:3.90px;color:#333;transform-origin:0 0;transform:scaleX(1.0000);"><span style="font-weight:400;">Accent</span></div><div class="t" style="left:115.96px;top:372.60px;font-size:3.90px;line-height:3.90px;color:#333;transform-origin:0 0;transform:scaleX(1.0000);"><span style="font-weight:400;">Digital Art</span></div><div class="t" style="left:235.80px;top:372.60px;font-size:3.90px;line-height:3.90px;color:#333;transform-origin:0 0;transform:scaleX(1.0000);"><span style="font-weight:400;">Ink</span></div><div class="t" style="left:348.09px;top:372.60px;font-size:3.90px;line-height:3.90px;color:#333;transform-origin:0 0;transform:scaleX(1.0000);"><span style="font-weight:400;">Golden Hour</span></div><div class="t" style="left:117.15px;top:425.55px;font-size:3.90px;line-height:3.90px;color:#333;transform-origin:0 0;transform:scaleX(1.0000);"><span style="font-weight:400;">Pixel Art</span></div><div class="t" style="left:233.09px;top:425.55px;font-size:3.90px;line-height:3.90px;color:#333;transform-origin:0 0;transform:scaleX(1.0000);"><span style="font-weight:400;">Pencil</span></div><div class="t" style="left:350.48px;top:425.55px;font-size:3.90px;line-height:3.90px;color:#333;transform-origin:0 0;transform:scaleX(1.0000);"><span style="font-weight:400;">Blue Hour</span></div><div class="t" style="left:116.39px;top:478.40px;font-size:3.90px;line-height:3.90px;color:#333;transform-origin:0 0;transform:scaleX(1.0000);"><span style="font-weight:400;">Isometric</span></div><div class="t" style="left:230.49px;top:478.40px;font-size:3.90px;line-height:3.90px;color:#333;transform-origin:0 0;transform:scaleX(1.0000);"><span style="font-weight:400;">Gouache</span></div><div class="t" style="left:348.64px;top:478.40px;font-size:3.90px;line-height:3.90px;color:#333;transform-origin:0 0;transform:scaleX(1.0000);"><span style="font-weight:400;">Chiaroscuro</span></div><div class="t" style="left:117.47px;top:531.70px;font-size:3.90px;line-height:3.90px;color:#333;transform-origin:0 0;transform:scaleX(1.0000);"><span style="font-weight:400;">Origami</span></div><div class="t" style="left:229.19px;top:531.70px;font-size:3.90px;line-height:3.90px;color:#333;transform-origin:0 0;transform:scaleX(1.0000);"><span style="font-weight:400;">Classic Oil</span></div><div class="t" style="left:351.24px;top:531.70px;font-size:3.90px;line-height:3.90px;color:#333;transform-origin:0 0;transform:scaleX(1.0000);"><span style="font-weight:400;">Backlight</span></div><div class="t" style="left:112.81px;top:585.50px;font-size:3.90px;line-height:3.90px;color:#333;transform-origin:0 0;transform:scaleX(1.0000);"><span style="font-weight:400;">Photographic</span></div><div class="t" style="left:233.41px;top:585.50px;font-size:3.90px;line-height:3.90px;color:#333;transform-origin:0 0;transform:scaleX(1.0000);"><span style="font-weight:400;">Chalk</span></div><div class="t" style="left:351.35px;top:585.50px;font-size:3.90px;line-height:3.90px;color:#333;transform-origin:0 0;transform:scaleX(1.0000);"><span style="font-weight:400;">Dramatic</span></div><div class="t" style="left:411.20px;top:189.04px;font-size:4.80px;line-height:4.80px;color:#1e1a1c;transform-origin:0 0;transform:scaleX(1.0757);"><span style="font-weight:400;-webkit-text-stroke:0.1px #1e1a1c">Iconic</span></div><div class="t" style="left:411.20px;top:194.75px;font-size:4.80px;line-height:4.80px;color:#1e1a1c;transform-origin:0 0;transform:scaleX(1.0757);"><span style="font-weight:400;-webkit-text-stroke:0.1px #1e1a1c">Trustworthy</span></div><div class="t" style="left:411.20px;top:200.46px;font-size:4.80px;line-height:4.80px;color:#1e1a1c;transform-origin:0 0;transform:scaleX(1.0757);"><span style="font-weight:400;-webkit-text-stroke:0.1px #1e1a1c">Sophisticated</span></div><div class="t" style="left:411.20px;top:206.17px;font-size:4.80px;line-height:4.80px;color:#1e1a1c;transform-origin:0 0;transform:scaleX(1.0757);"><span style="font-weight:400;-webkit-text-stroke:0.1px #1e1a1c">Optimistic</span></div><div class="t" style="left:411.20px;top:211.88px;font-size:4.80px;line-height:4.80px;color:#1e1a1c;transform-origin:0 0;transform:scaleX(1.0757);"><span style="font-weight:400;-webkit-text-stroke:0.1px #1e1a1c">Premium</span></div><div class="t" style="left:411.20px;top:217.59px;font-size:4.80px;line-height:4.80px;color:#1e1a1c;transform-origin:0 0;transform:scaleX(1.0757);"><span style="font-weight:400;-webkit-text-stroke:0.1px #1e1a1c">Engaging</span></div><div class="t" style="left:411.20px;top:223.30px;font-size:4.80px;line-height:4.80px;color:#1e1a1c;transform-origin:0 0;transform:scaleX(1.0757);"><span style="font-weight:400;-webkit-text-stroke:0.1px #1e1a1c">Charismatic</span></div><div class="t" style="left:411.20px;top:229.01px;font-size:4.80px;line-height:4.80px;color:#1e1a1c;transform-origin:0 0;transform:scaleX(1.0757);"><span style="font-weight:400;-webkit-text-stroke:0.1px #1e1a1c">Serene</span></div><div class="t" style="left:411.20px;top:234.72px;font-size:4.80px;line-height:4.80px;color:#1e1a1c;transform-origin:0 0;transform:scaleX(1.0757);"><span style="font-weight:400;-webkit-text-stroke:0.1px #1e1a1c">Vibrant</span></div><div class="t" style="left:411.20px;top:240.43px;font-size:4.80px;line-height:4.80px;color:#1e1a1c;transform-origin:0 0;transform:scaleX(1.0757);"><span style="font-weight:400;-webkit-text-stroke:0.1px #1e1a1c">Haunting</span></div><div class="t" style="left:411.20px;top:246.14px;font-size:4.80px;line-height:4.80px;color:#1e1a1c;transform-origin:0 0;transform:scaleX(1.0757);"><span style="font-weight:400;-webkit-text-stroke:0.1px #1e1a1c">Alluring</span></div><div class="t" style="left:411.20px;top:251.85px;font-size:4.80px;line-height:4.80px;color:#1e1a1c;transform-origin:0 0;transform:scaleX(1.0757);"><span style="font-weight:400;-webkit-text-stroke:0.1px #1e1a1c">Enigmatic</span></div><div class="t" style="left:411.20px;top:257.56px;font-size:4.80px;line-height:4.80px;color:#1e1a1c;transform-origin:0 0;transform:scaleX(1.0757);"><span style="font-weight:400;-webkit-text-stroke:0.1px #1e1a1c">Majestic</span></div><div class="t" style="left:411.20px;top:263.27px;font-size:4.80px;line-height:4.80px;color:#1e1a1c;transform-origin:0 0;transform:scaleX(1.0757);"><span style="font-weight:400;-webkit-text-stroke:0.1px #1e1a1c">Whimsical</span></div><div class="t" style="left:411.20px;top:268.98px;font-size:4.80px;line-height:4.80px;color:#1e1a1c;transform-origin:0 0;transform:scaleX(1.0757);"><span style="font-weight:400;-webkit-text-stroke:0.1px #1e1a1c">Endearing</span></div><div class="t" style="left:411.20px;top:274.69px;font-size:4.80px;line-height:4.80px;color:#1e1a1c;transform-origin:0 0;transform:scaleX(1.0757);"><span style="font-weight:400;-webkit-text-stroke:0.1px #1e1a1c">Captivating</span></div><div class="t" style="left:411.20px;top:280.40px;font-size:4.80px;line-height:4.80px;color:#1e1a1c;transform-origin:0 0;transform:scaleX(1.0757);"><span style="font-weight:400;-webkit-text-stroke:0.1px #1e1a1c">Impressive</span></div><div class="t" style="left:411.20px;top:286.11px;font-size:4.80px;line-height:4.80px;color:#1e1a1c;transform-origin:0 0;transform:scaleX(1.0757);"><span style="font-weight:400;-webkit-text-stroke:0.1px #1e1a1c">Ephemeral</span></div><div class="t" style="left:411.20px;top:291.82px;font-size:4.80px;line-height:4.80px;color:#1e1a1c;transform-origin:0 0;transform:scaleX(1.0757);"><span style="font-weight:400;-webkit-text-stroke:0.1px #1e1a1c">Breathtaking</span></div><div class="t" style="left:411.20px;top:297.53px;font-size:4.80px;line-height:4.80px;color:#1e1a1c;transform-origin:0 0;transform:scaleX(1.0757);"><span style="font-weight:400;-webkit-text-stroke:0.1px #1e1a1c">Mesmerizing</span></div><div class="t" style="left:411.20px;top:303.24px;font-size:4.80px;line-height:4.80px;color:#1e1a1c;transform-origin:0 0;transform:scaleX(1.0757);"><span style="font-weight:400;-webkit-text-stroke:0.1px #1e1a1c">Evocative</span></div><div class="t" style="left:411.20px;top:308.95px;font-size:4.80px;line-height:4.80px;color:#1e1a1c;transform-origin:0 0;transform:scaleX(1.0757);"><span style="font-weight:400;-webkit-text-stroke:0.1px #1e1a1c">Pensive</span></div><div class="t" style="left:411.20px;top:314.66px;font-size:4.80px;line-height:4.80px;color:#1e1a1c;transform-origin:0 0;transform:scaleX(1.0757);"><span style="font-weight:400;-webkit-text-stroke:0.1px #1e1a1c">Dynamic</span></div><div class="t" style="left:411.20px;top:320.37px;font-size:4.80px;line-height:4.80px;color:#1e1a1c;transform-origin:0 0;transform:scaleX(1.0757);"><span style="font-weight:400;-webkit-text-stroke:0.1px #1e1a1c">Ethereal</span></div><div class="t" style="left:411.20px;top:326.08px;font-size:4.80px;line-height:4.80px;color:#1e1a1c;transform-origin:0 0;transform:scaleX(1.0757);"><span style="font-weight:400;-webkit-text-stroke:0.1px #1e1a1c">Intriguing</span></div><div class="t" style="left:411.20px;top:331.79px;font-size:4.80px;line-height:4.80px;color:#1e1a1c;transform-origin:0 0;transform:scaleX(1.0757);"><span style="font-weight:400;-webkit-text-stroke:0.1px #1e1a1c">Aerial</span></div><div class="t" style="left:411.20px;top:337.50px;font-size:4.80px;line-height:4.80px;color:#1e1a1c;transform-origin:0 0;transform:scaleX(1.0757);"><span style="font-weight:400;-webkit-text-stroke:0.1px #1e1a1c">Panoramic</span></div><div class="t" style="left:411.20px;top:343.21px;font-size:4.80px;line-height:4.80px;color:#1e1a1c;transform-origin:0 0;transform:scaleX(1.0757);"><span style="font-weight:400;-webkit-text-stroke:0.1px #1e1a1c">Grainy</span></div><div class="t" style="left:411.20px;top:348.92px;font-size:4.80px;line-height:4.80px;color:#1e1a1c;transform-origin:0 0;transform:scaleX(1.0757);"><span style="font-weight:400;-webkit-text-stroke:0.1px #1e1a1c">Delineated</span></div><div class="t" style="left:411.20px;top:354.63px;font-size:4.80px;line-height:4.80px;color:#1e1a1c;transform-origin:0 0;transform:scaleX(1.0757);"><span style="font-weight:400;-webkit-text-stroke:0.1px #1e1a1c">Historic</span></div><div class="t" style="left:411.20px;top:360.34px;font-size:4.80px;line-height:4.80px;color:#1e1a1c;transform-origin:0 0;transform:scaleX(1.0757);"><span style="font-weight:400;-webkit-text-stroke:0.1px #1e1a1c">Vivid</span></div><div class="t" style="left:411.20px;top:366.05px;font-size:4.80px;line-height:4.80px;color:#1e1a1c;transform-origin:0 0;transform:scaleX(1.0757);"><span style="font-weight:400;-webkit-text-stroke:0.1px #1e1a1c">Beautiful</span></div><div class="t" style="left:411.20px;top:371.76px;font-size:4.80px;line-height:4.80px;color:#1e1a1c;transform-origin:0 0;transform:scaleX(1.0757);"><span style="font-weight:400;-webkit-text-stroke:0.1px #1e1a1c">Evocative</span></div><div class="t" style="left:411.20px;top:377.47px;font-size:4.80px;line-height:4.80px;color:#1e1a1c;transform-origin:0 0;transform:scaleX(1.0757);"><span style="font-weight:400;-webkit-text-stroke:0.1px #1e1a1c">Interesting</span></div><div class="t" style="left:411.20px;top:383.18px;font-size:4.80px;line-height:4.80px;color:#1e1a1c;transform-origin:0 0;transform:scaleX(1.0757);"><span style="font-weight:400;-webkit-text-stroke:0.1px #1e1a1c">Serene</span></div><div class="t" style="left:411.20px;top:388.89px;font-size:4.80px;line-height:4.80px;color:#1e1a1c;transform-origin:0 0;transform:scaleX(1.0757);"><span style="font-weight:400;-webkit-text-stroke:0.1px #1e1a1c">Striking</span></div><div class="t" style="left:411.20px;top:394.60px;font-size:4.80px;line-height:4.80px;color:#1e1a1c;transform-origin:0 0;transform:scaleX(1.0757);"><span style="font-weight:400;-webkit-text-stroke:0.1px #1e1a1c">Picturesque</span></div><div class="t" style="left:411.20px;top:400.31px;font-size:4.80px;line-height:4.80px;color:#1e1a1c;transform-origin:0 0;transform:scaleX(1.0757);"><span style="font-weight:400;-webkit-text-stroke:0.1px #1e1a1c">Dramatic</span></div><div class="t" style="left:411.20px;top:406.02px;font-size:4.80px;line-height:4.80px;color:#1e1a1c;transform-origin:0 0;transform:scaleX(1.0757);"><span style="font-weight:400;-webkit-text-stroke:0.1px #1e1a1c">Colorful</span></div><div class="t" style="left:411.20px;top:411.73px;font-size:4.80px;line-height:4.80px;color:#1e1a1c;transform-origin:0 0;transform:scaleX(1.0757);"><span style="font-weight:400;-webkit-text-stroke:0.1px #1e1a1c">Detailed</span></div><div class="t" style="left:411.20px;top:417.44px;font-size:4.80px;line-height:4.80px;color:#1e1a1c;transform-origin:0 0;transform:scaleX(1.0757);"><span style="font-weight:400;-webkit-text-stroke:0.1px #1e1a1c">Glossy</span></div><div class="t" style="left:411.20px;top:423.15px;font-size:4.80px;line-height:4.80px;color:#1e1a1c;transform-origin:0 0;transform:scaleX(1.0757);"><span style="font-weight:400;-webkit-text-stroke:0.1px #1e1a1c">Expressive</span></div><div class="t" style="left:411.20px;top:428.86px;font-size:4.80px;line-height:4.80px;color:#1e1a1c;transform-origin:0 0;transform:scaleX(1.0757);"><span style="font-weight:400;-webkit-text-stroke:0.1px #1e1a1c">Blurry</span></div><div class="t" style="left:411.20px;top:434.57px;font-size:4.80px;line-height:4.80px;color:#1e1a1c;transform-origin:0 0;transform:scaleX(1.0757);"><span style="font-weight:400;-webkit-text-stroke:0.1px #1e1a1c">Attractive</span></div><div class="t" style="left:411.20px;top:440.28px;font-size:4.80px;line-height:4.80px;color:#1e1a1c;transform-origin:0 0;transform:scaleX(1.0757);"><span style="font-weight:400;-webkit-text-stroke:0.1px #1e1a1c">Eye-catching</span></div><div class="t" style="left:411.20px;top:445.99px;font-size:4.80px;line-height:4.80px;color:#1e1a1c;transform-origin:0 0;transform:scaleX(1.0757);"><span style="font-weight:400;-webkit-text-stroke:0.1px #1e1a1c">Magnetic</span></div><div class="t" style="left:411.20px;top:451.70px;font-size:4.80px;line-height:4.80px;color:#1e1a1c;transform-origin:0 0;transform:scaleX(1.0757);"><span style="font-weight:400;-webkit-text-stroke:0.1px #1e1a1c">Candid</span></div><div class="t" style="left:411.20px;top:457.41px;font-size:4.80px;line-height:4.80px;color:#1e1a1c;transform-origin:0 0;transform:scaleX(1.0757);"><span style="font-weight:400;-webkit-text-stroke:0.1px #1e1a1c">Framed</span></div><div class="t" style="left:411.20px;top:463.12px;font-size:4.80px;line-height:4.80px;color:#1e1a1c;transform-origin:0 0;transform:scaleX(1.0757);"><span style="font-weight:400;-webkit-text-stroke:0.1px #1e1a1c">Graphic</span></div><div style="left:455.90px;top:199.40px;width:5.20px;height:4.80px;background:#1a9bf0;border-radius:1px"></div><div style="left:457.10px;top:200.90px;width:2.80px;height:1.80px;background:#e8f4fe;border-radius:0.5px"></div><div style="left:463.20px;top:199.40px;width:5.20px;height:4.80px;background:#1a9bf0;border-radius:1px"></div><div style="left:464.40px;top:200.90px;width:2.80px;height:1.80px;background:#e8f4fe;border-radius:0.5px"></div><div class="t" style="left:455.20px;top:205.57px;font-size:5.00px;line-height:5.00px;color:#8a8a8a;transform-origin:0 0;transform:scaleX(1.0600);"><span style="font-weight:400;">Tambahkan</span></div><div class="t" style="left:455.20px;top:212.01px;font-size:5.00px;line-height:5.00px;color:#8a8a8a;transform-origin:0 0;transform:scaleX(1.0600);"><span style="font-weight:400;">adjective</span></div><div class="t" style="left:455.20px;top:218.45px;font-size:5.00px;line-height:5.00px;color:#8a8a8a;transform-origin:0 0;transform:scaleX(1.0600);"><span style="font-weight:400;">berikut</span></div><div class="t" style="left:455.20px;top:224.89px;font-size:5.00px;line-height:5.00px;color:#8a8a8a;transform-origin:0 0;transform:scaleX(1.0600);"><span style="font-weight:400;">sebelum objek.</span></div><div class="t" style="left:455.20px;top:231.33px;font-size:5.00px;line-height:5.00px;color:#333;transform-origin:0 0;transform:scaleX(1.1221);"><span style="font-weight:400;;-webkit-text-stroke:0.12px #333">Misalnya:</span></div><div class="t" style="left:455.20px;top:237.77px;font-size:5.00px;line-height:5.00px;color:#222;transform-origin:0 0;transform:scaleX(1.0702);"><span style="font-weight:400;;-webkit-text-stroke:0.12px #222">Create a</span></div><div class="t" style="left:455.20px;top:244.21px;font-size:5.00px;line-height:5.00px;color:#222;transform-origin:0 0;transform:scaleX(1.1519);"><span style="font-weight:400;;-webkit-text-stroke:0.12px #222">picture of</span></div><div class="t" style="left:455.20px;top:250.65px;font-size:5.00px;line-height:5.00px;color:#222;transform-origin:0 0;transform:scaleX(1.1442);"><span style="font-weight:400;text-decoration:underline;text-decoration-thickness:0.5px;text-underline-offset:0.6px;-webkit-text-stroke:0.12px #222">haunting</span></div><div class="t" style="left:455.20px;top:257.09px;font-size:5.00px;line-height:5.00px;color:#222;transform-origin:0 0;transform:scaleX(1.1307);"><span style="font-weight:400;text-decoration:underline;text-decoration-thickness:0.5px;text-underline-offset:0.6px;-webkit-text-stroke:0.12px #222">house,</span><span style="font-weight:400;;-webkit-text-stroke:0.12px #222"> with</span></div><div class="t" style="left:455.20px;top:263.53px;font-size:5.00px;line-height:5.00px;color:#222;transform-origin:0 0;transform:scaleX(1.1339);"><span style="font-weight:400;text-decoration:underline;text-decoration-thickness:0.5px;text-underline-offset:0.6px;-webkit-text-stroke:0.12px #222">breathtaking</span></div><div class="t" style="left:455.20px;top:269.97px;font-size:5.00px;line-height:5.00px;color:#222;transform-origin:0 0;transform:scaleX(1.1265);"><span style="font-weight:400;text-decoration:underline;text-decoration-thickness:0.5px;text-underline-offset:0.6px;-webkit-text-stroke:0.12px #222">panoramic</span></div><div class="t" style="left:455.20px;top:276.41px;font-size:5.00px;line-height:5.00px;color:#222;transform-origin:0 0;transform:scaleX(1.1268);"><span style="font-weight:400;text-decoration:underline;text-decoration-thickness:0.5px;text-underline-offset:0.6px;-webkit-text-stroke:0.12px #222">view.</span></div><div style="left:519.40px;top:186.50px;width:217.50px;height:160.60px;overflow:hidden"><div class="t" style="left:1.50px;top:2.63px;font-size:4.10px;line-height:4.10px;color:#3c3c48;transform-origin:0 0;transform:scaleX(1.1170);"><span style="font-weight:400;">Leonardo da Vinci - Renaisans: POV melukis Mona Lisa atau The Last Supper.</span></div></div><div style="left:519.40px;top:186.50px;width:217.50px;height:160.60px;overflow:hidden"><div class="t" style="left:1.50px;top:8.09px;font-size:4.10px;line-height:4.10px;color:#3c3c48;transform-origin:0 0;transform:scaleX(1.1170);"><span style="font-weight:400;">Michelangelo - Manierisme: POV membuat patung Pietà atau David.</span></div></div><div style="left:519.40px;top:186.50px;width:217.50px;height:160.60px;overflow:hidden"><div class="t" style="left:1.50px;top:13.55px;font-size:4.10px;line-height:4.10px;color:#3c3c48;transform-origin:0 0;transform:scaleX(1.1170);"><span style="font-weight:400;">Raphael - Renaisans: POV menggambar School of Athens atau Madonna di San Sisto.</span></div></div><div style="left:519.40px;top:186.50px;width:217.50px;height:160.60px;overflow:hidden"><div class="t" style="left:1.50px;top:19.01px;font-size:4.10px;line-height:4.10px;color:#3c3c48;transform-origin:0 0;transform:scaleX(1.1170);"><span style="font-weight:400;">Rembrandt - Barok: POV melukis The Night Watch atau Self-Portrait.</span></div></div><div style="left:519.40px;top:186.50px;width:217.50px;height:160.60px;overflow:hidden"><div class="t" style="left:1.50px;top:24.47px;font-size:4.10px;line-height:4.10px;color:#3c3c48;transform-origin:0 0;transform:scaleX(1.1170);"><span style="font-weight:400;">Caravaggio - Barok: POV melukis The Calling of Saint Matthew atau Judith Beheading Holofernes.</span></div></div><div style="left:519.40px;top:186.50px;width:217.50px;height:160.60px;overflow:hidden"><div class="t" style="left:1.50px;top:29.93px;font-size:4.10px;line-height:4.10px;color:#3c3c48;transform-origin:0 0;transform:scaleX(1.1170);"><span style="font-weight:400;">Vermeer - Barok: POV membuat lukisan Girl with a Pearl Earring atau The Milkmaid.</span></div></div><div style="left:519.40px;top:186.50px;width:217.50px;height:160.60px;overflow:hidden"><div class="t" style="left:1.50px;top:35.39px;font-size:4.10px;line-height:4.10px;color:#3c3c48;transform-origin:0 0;transform:scaleX(1.1170);"><span style="font-weight:400;">Goya - Romantisisme: POV melukis The Third of May 1808 atau Saturn Devouring His Son.</span></div></div><div style="left:519.40px;top:186.50px;width:217.50px;height:160.60px;overflow:hidden"><div class="t" style="left:1.50px;top:40.85px;font-size:4.10px;line-height:4.10px;color:#3c3c48;transform-origin:0 0;transform:scaleX(1.1170);"><span style="font-weight:400;">Turner - Romantisisme: POV melukis The Fighting Temeraire atau Rain, Steam and Speed.</span></div></div><div style="left:519.40px;top:186.50px;width:217.50px;height:160.60px;overflow:hidden"><div class="t" style="left:1.50px;top:46.31px;font-size:4.10px;line-height:4.10px;color:#3c3c48;transform-origin:0 0;transform:scaleX(1.1170);"><span style="font-weight:400;">Monet - Impresionisme: POV melukis Water Lilies atau Impression, Sunrise.</span></div></div><div style="left:519.40px;top:186.50px;width:217.50px;height:160.60px;overflow:hidden"><div class="t" style="left:1.50px;top:51.77px;font-size:4.10px;line-height:4.10px;color:#3c3c48;transform-origin:0 0;transform:scaleX(1.1170);"><span style="font-weight:400;">Van Gogh - Post-Impresionisme: POV membuat lukisan Starry Night atau Sunflowers.</span></div></div><div style="left:519.40px;top:186.50px;width:217.50px;height:160.60px;overflow:hidden"><div class="t" style="left:1.50px;top:57.23px;font-size:4.10px;line-height:4.10px;color:#3c3c48;transform-origin:0 0;transform:scaleX(1.1170);"><span style="font-weight:400;">Matisse - Fauvisme: POV membuat lukisan Dance atau The Joy of Life.</span></div></div><div style="left:519.40px;top:186.50px;width:217.50px;height:160.60px;overflow:hidden"><div class="t" style="left:1.50px;top:62.69px;font-size:4.10px;line-height:4.10px;color:#3c3c48;transform-origin:0 0;transform:scaleX(1.1170);"><span style="font-weight:400;">Picasso - Kubisme: POV menciptakan Guernica atau Les Demoiselles d&#x27;Avignon.</span></div></div><div style="left:519.40px;top:186.50px;width:217.50px;height:160.60px;overflow:hidden"><div class="t" style="left:1.50px;top:68.15px;font-size:4.10px;line-height:4.10px;color:#3c3c48;transform-origin:0 0;transform:scaleX(1.1170);"><span style="font-weight:400;">Kandinsky - Abstraksionisme: POV menciptakan Composition VII atau Yellow-Red-Blue.</span></div></div><div style="left:519.40px;top:186.50px;width:217.50px;height:160.60px;overflow:hidden"><div class="t" style="left:1.50px;top:73.61px;font-size:4.10px;line-height:4.10px;color:#3c3c48;transform-origin:0 0;transform:scaleX(1.1170);"><span style="font-weight:400;">Dali - Surrealisme: POV melukis The Persistence of Memory atau Swans Reflecting Elephants.</span></div></div><div style="left:519.40px;top:186.50px;width:217.50px;height:160.60px;overflow:hidden"><div class="t" style="left:1.50px;top:79.07px;font-size:4.10px;line-height:4.10px;color:#3c3c48;transform-origin:0 0;transform:scaleX(1.1170);"><span style="font-weight:400;">Frida Kahlo - Realisme Magis: POV membuat lukisan Self-Portrait with Thorn Necklace and Hummingbird.</span></div></div><div style="left:519.40px;top:186.50px;width:217.50px;height:160.60px;overflow:hidden"><div class="t" style="left:1.50px;top:84.53px;font-size:4.10px;line-height:4.10px;color:#3c3c48;transform-origin:0 0;transform:scaleX(1.1170);"><span style="font-weight:400;">Jackson Pollock - Ekspresionisme Abstrak: POV melukis No. 5, 1948 atau Convergence.</span></div></div><div style="left:519.40px;top:186.50px;width:217.50px;height:160.60px;overflow:hidden"><div class="t" style="left:1.50px;top:89.99px;font-size:4.10px;line-height:4.10px;color:#3c3c48;transform-origin:0 0;transform:scaleX(1.1170);"><span style="font-weight:400;">Mark Rothko - Ekspresionisme Abstrak: POV membuat lukisan Orange and Yellow atau No. 61 (Rust and Blue).</span></div></div><div style="left:519.40px;top:186.50px;width:217.50px;height:160.60px;overflow:hidden"><div class="t" style="left:1.50px;top:95.45px;font-size:4.10px;line-height:4.10px;color:#3c3c48;transform-origin:0 0;transform:scaleX(1.1170);"><span style="font-weight:400;">Andy Warhol - Pop Art: POV menciptakan Campbell&#x27;s Soup Cans atau Marilyn Diptych.</span></div></div><div style="left:519.40px;top:186.50px;width:217.50px;height:160.60px;overflow:hidden"><div class="t" style="left:1.50px;top:100.91px;font-size:4.10px;line-height:4.10px;color:#3c3c48;transform-origin:0 0;transform:scaleX(1.1170);"><span style="font-weight:400;">Roy Lichtenstein - Pop Art: POV melukis Whaam! atau Drowning Girl.</span></div></div><div style="left:519.40px;top:186.50px;width:217.50px;height:160.60px;overflow:hidden"><div class="t" style="left:1.50px;top:106.37px;font-size:4.10px;line-height:4.10px;color:#3c3c48;transform-origin:0 0;transform:scaleX(1.1170);"><span style="font-weight:400;">Basquiat - Neo-Ekspresionisme: POV menciptakan Untitled (Skull) atau Untitled (Boxer).</span></div></div><div style="left:519.40px;top:186.50px;width:217.50px;height:160.60px;overflow:hidden"><div class="t" style="left:1.50px;top:111.83px;font-size:4.10px;line-height:4.10px;color:#3c3c48;transform-origin:0 0;transform:scaleX(1.1170);"><span style="font-weight:400;">Hokusai - Ukiyo-e: POV membuat lukisan The Great Wave off Kanagawa atau Thirty-Six Views of Mount Fuji.</span></div></div><div style="left:519.40px;top:186.50px;width:217.50px;height:160.60px;overflow:hidden"><div class="t" style="left:1.50px;top:117.29px;font-size:4.10px;line-height:4.10px;color:#3c3c48;transform-origin:0 0;transform:scaleX(1.1170);"><span style="font-weight:400;">Utamaro - Ukiyo-e: POV melukis The Flowers of Edo atau Poem of the Pillow.</span></div></div><div style="left:519.40px;top:186.50px;width:217.50px;height:160.60px;overflow:hidden"><div class="t" style="left:1.50px;top:122.75px;font-size:4.10px;line-height:4.10px;color:#3c3c48;transform-origin:0 0;transform:scaleX(1.1170);"><span style="font-weight:400;">Hiroshige - Ukiyo-e: POV membuat lukisan The Fifty-Three Stations of the Tōkaidō atau One Hundred Famous Views of Edo.</span></div></div><div style="left:519.40px;top:186.50px;width:217.50px;height:160.60px;overflow:hidden"><div class="t" style="left:1.50px;top:128.21px;font-size:4.10px;line-height:4.10px;color:#3c3c48;transform-origin:0 0;transform:scaleX(1.1170);"><span style="font-weight:400;">Toulouse-Lautrec - Post-Impresionisme: POV melukis Moulin Rouge: La Goulue atau At the Moulin Rouge.</span></div></div><div style="left:519.40px;top:186.50px;width:217.50px;height:160.60px;overflow:hidden"><div class="t" style="left:1.50px;top:133.67px;font-size:4.10px;line-height:4.10px;color:#3c3c48;transform-origin:0 0;transform:scaleX(1.1170);"><span style="font-weight:400;">Georgia O&#x27;Keeffe - Modernisme Amerika: POV membuat lukisan Black Iris atau Red Canna.</span></div></div><div class="t" style="left:769.00px;top:188.74px;font-size:4.20px;line-height:4.20px;color:#3a2a30;transform-origin:0 0;transform:scaleX(1.1085);"><span style="font-weight:400;">Polaroid</span></div><div class="t" style="left:769.00px;top:194.22px;font-size:4.20px;line-height:4.20px;color:#3a2a30;transform-origin:0 0;transform:scaleX(1.1085);"><span style="font-weight:400;">Kamera Lomo</span></div><div class="t" style="left:769.00px;top:199.70px;font-size:4.20px;line-height:4.20px;color:#3a2a30;transform-origin:0 0;transform:scaleX(1.1085);"><span style="font-weight:400;">Kamera Hasselblad</span></div><div class="t" style="left:769.00px;top:205.18px;font-size:4.20px;line-height:4.20px;color:#3a2a30;transform-origin:0 0;transform:scaleX(1.1085);"><span style="font-weight:400;">Kamera DSLR</span></div><div class="t" style="left:769.00px;top:210.66px;font-size:4.20px;line-height:4.20px;color:#3a2a30;transform-origin:0 0;transform:scaleX(1.1085);"><span style="font-weight:400;">Kamera Leica</span></div><div class="t" style="left:769.00px;top:216.14px;font-size:4.20px;line-height:4.20px;color:#3a2a30;transform-origin:0 0;transform:scaleX(1.1085);"><span style="font-weight:400;">Kamera GoPro</span></div><div class="t" style="left:769.00px;top:221.62px;font-size:4.20px;line-height:4.20px;color:#3a2a30;transform-origin:0 0;transform:scaleX(1.1085);"><span style="font-weight:400;">Polaroid SX-70</span></div><div class="t" style="left:769.00px;top:227.10px;font-size:4.20px;line-height:4.20px;color:#3a2a30;transform-origin:0 0;transform:scaleX(1.1085);"><span style="font-weight:400;">Kamera Cinematic</span></div><div class="t" style="left:769.00px;top:232.58px;font-size:4.20px;line-height:4.20px;color:#3a2a30;transform-origin:0 0;transform:scaleX(1.1085);"><span style="font-weight:400;">Kamera Smartphone</span></div><div class="t" style="left:769.00px;top:238.06px;font-size:4.20px;line-height:4.20px;color:#3a2a30;transform-origin:0 0;transform:scaleX(1.1085);"><span style="font-weight:400;">Kamera Canon</span></div><div class="t" style="left:769.00px;top:243.54px;font-size:4.20px;line-height:4.20px;color:#3a2a30;transform-origin:0 0;transform:scaleX(1.1085);"><span style="font-weight:400;">Kamera Nikon</span></div><div class="t" style="left:769.00px;top:249.02px;font-size:4.20px;line-height:4.20px;color:#3a2a30;transform-origin:0 0;transform:scaleX(1.1085);"><span style="font-weight:400;">Kamera Fujifilm Instax</span></div><div class="t" style="left:769.00px;top:254.50px;font-size:4.20px;line-height:4.20px;color:#3a2a30;transform-origin:0 0;transform:scaleX(1.1085);"><span style="font-weight:400;">Kamera Sony Alpha</span></div><div class="t" style="left:769.00px;top:259.98px;font-size:4.20px;line-height:4.20px;color:#3a2a30;transform-origin:0 0;transform:scaleX(1.1085);"><span style="font-weight:400;">Kamera Olympus</span></div><div class="t" style="left:769.00px;top:265.46px;font-size:4.20px;line-height:4.20px;color:#3a2a30;transform-origin:0 0;transform:scaleX(1.1085);"><span style="font-weight:400;">Kamera Pentax</span></div><div class="t" style="left:769.00px;top:270.94px;font-size:4.20px;line-height:4.20px;color:#3a2a30;transform-origin:0 0;transform:scaleX(1.1085);"><span style="font-weight:400;">Kamera Panasonic Lumix</span></div><div class="t" style="left:769.00px;top:276.42px;font-size:4.20px;line-height:4.20px;color:#3a2a30;transform-origin:0 0;transform:scaleX(1.1085);"><span style="font-weight:400;">Kamera Samsung NX</span></div><div class="t" style="left:769.00px;top:281.90px;font-size:4.20px;line-height:4.20px;color:#3a2a30;transform-origin:0 0;transform:scaleX(1.1085);"><span style="font-weight:400;">Kamera Medium Format</span></div><div class="t" style="left:769.00px;top:287.38px;font-size:4.20px;line-height:4.20px;color:#3a2a30;transform-origin:0 0;transform:scaleX(1.1085);"><span style="font-weight:400;">Kamera Large Format</span></div><div class="t" style="left:769.00px;top:292.86px;font-size:4.20px;line-height:4.20px;color:#3a2a30;transform-origin:0 0;transform:scaleX(1.1085);"><span style="font-weight:400;">Kamera Street Photography</span></div><div class="t" style="left:769.00px;top:298.34px;font-size:4.20px;line-height:4.20px;color:#3a2a30;transform-origin:0 0;transform:scaleX(1.1085);"><span style="font-weight:400;">Kamera Night Vision</span></div><div class="t" style="left:769.00px;top:303.82px;font-size:4.20px;line-height:4.20px;color:#3a2a30;transform-origin:0 0;transform:scaleX(1.1085);"><span style="font-weight:400;">Kamera Inframerah</span></div><div class="t" style="left:769.00px;top:309.30px;font-size:4.20px;line-height:4.20px;color:#3a2a30;transform-origin:0 0;transform:scaleX(1.1085);"><span style="font-weight:400;">Kamera 360 Degree</span></div><div class="t" style="left:769.00px;top:314.78px;font-size:4.20px;line-height:4.20px;color:#3a2a30;transform-origin:0 0;transform:scaleX(1.1085);"><span style="font-weight:400;">Kamera Aksi (Action Camera)</span></div><div class="t" style="left:769.00px;top:320.26px;font-size:4.20px;line-height:4.20px;color:#3a2a30;transform-origin:0 0;transform:scaleX(1.1085);"><span style="font-weight:400;">Kamera Aerial (Drone)</span></div><div class="t" style="left:862.10px;top:196.64px;font-size:4.20px;line-height:4.20px;color:#2a2a3a;transform-origin:0 0;transform:scaleX(1.0236);"><span style="font-weight:400;">Bird Eye View</span></div><div class="t" style="left:862.10px;top:201.54px;font-size:4.20px;line-height:4.20px;color:#2a2a3a;transform-origin:0 0;transform:scaleX(1.0236);"><span style="font-weight:400;">Top Angle</span></div><div class="t" style="left:862.10px;top:206.44px;font-size:4.20px;line-height:4.20px;color:#2a2a3a;transform-origin:0 0;transform:scaleX(1.0236);"><span style="font-weight:400;">Eye Level Angle</span></div><div class="t" style="left:862.10px;top:211.34px;font-size:4.20px;line-height:4.20px;color:#2a2a3a;transform-origin:0 0;transform:scaleX(1.0236);"><span style="font-weight:400;">Low Angle</span></div><div class="t" style="left:862.10px;top:216.24px;font-size:4.20px;line-height:4.20px;color:#2a2a3a;transform-origin:0 0;transform:scaleX(1.0236);"><span style="font-weight:400;">Frog Eye</span></div><div class="t" style="left:862.10px;top:221.14px;font-size:4.20px;line-height:4.20px;color:#2a2a3a;transform-origin:0 0;transform:scaleX(1.0236);"><span style="font-weight:400;">Dari Dalam Air</span></div><div class="t" style="left:862.10px;top:226.04px;font-size:4.20px;line-height:4.20px;color:#2a2a3a;transform-origin:0 0;transform:scaleX(1.0236);"><span style="font-weight:400;">Tilt Angle</span></div><div class="t" style="left:862.10px;top:230.94px;font-size:4.20px;line-height:4.20px;color:#2a2a3a;transform-origin:0 0;transform:scaleX(1.0236);"><span style="font-weight:400;">Pantulan/ Refleksi</span></div><div class="t" style="left:862.10px;top:235.84px;font-size:4.20px;line-height:4.20px;color:#2a2a3a;transform-origin:0 0;transform:scaleX(1.0236);"><span style="font-weight:400;">Fish-eye</span></div><div class="t" style="left:582.90px;top:182.50px;font-size:3.90px;line-height:3.90px;color:#888;transform-origin:0 0;transform:scaleX(1.0599);"><span style="font-weight:400;color:#8a8a8a">Tambahkan di bagian akhir. Misalnya: art of beautiful women, </span><span style="font-weight:400;text-decoration:underline;text-decoration-thickness:0.5px;text-underline-offset:0.6px;color:#222">by Leonardo da Vinci</span></div><div style="left:46.00px;top:77.80px;width:8.20px;height:10.70px;background:#1ea362;border-radius:1px 2.4px 1px 1px"></div><div style="left:51.60px;top:77.80px;width:2.60px;height:2.60px;background:#8ed1ae;border-radius:0 2px 0 0"></div><div style="left:47.40px;top:82.20px;width:5.40px;height:3.40px;border:0.8px solid #d8f0e0;border-radius:0.3px"></div><div style="left:47.40px;top:83.70px;width:5.40px;height:0.40px;background:#d8f0e0"></div><div style="left:49.60px;top:82.20px;width:0.40px;height:3.40px;background:#d8f0e0"></div><div class="t" style="left:58.30px;top:77.63px;font-size:5.40px;line-height:5.40px;color:#3c4043;transform-origin:0 0;transform:scaleX(0.9706);"><span style="font-weight:400;">Visual AI</span></div><svg style="position:absolute;left:84.70px;top:77.00px;width:5.40px;height:5.40px;" viewBox="0 0 24 24"><path fill="#444" d="M22 9.24l-7.19-.62L12 2 9.19 8.63 2 9.24l5.46 4.73L5.82 21 12 17.27 18.18 21l-1.63-7.03L22 9.24zM12 15.4l-3.76 2.27 1-4.28-3.32-2.88 4.38-.38L12 6.1l1.71 4.04 4.38.38-3.32 2.88 1 4.28L12 15.4z"/></svg><svg style="position:absolute;left:94.60px;top:77.00px;width:5.60px;height:5.60px;" viewBox="0 0 24 24"><path fill="#444" d="M20 6h-8l-2-2H4c-1.1 0-1.99.9-1.99 2L2 18c0 1.1.9 2 2 2h16c1.1 0 2-.9 2-2V8c0-1.1-.9-2-2-2zm0 12H4V8h7v10h2V8h7v10z"/></svg><svg style="position:absolute;left:103.90px;top:76.80px;width:6.20px;height:6.20px;" viewBox="0 0 24 24"><path fill="#444" d="M19.35 10.04C18.67 6.59 15.64 4 12 4 9.11 4 6.6 5.64 5.35 8.04 2.34 8.36 0 10.91 0 14c0 3.31 2.69 6 6 6h13c2.76 0 5-2.24 5-5 0-2.64-2.05-4.78-4.65-4.96zM19 18H6c-2.21 0-4-1.79-4-4 0-2.05 1.53-3.76 3.56-3.97l1.07-.11.5-.95C8.08 7.14 9.94 6 12 6c2.62 0 4.88 1.86 5.39 4.43l.3 1.5 1.53.11c1.56.1 2.78 1.41 2.78 2.96 0 1.65-1.35 3-3 3zM10 15.2l-2.6-2.6-1.4 1.4 4 4 6-6-1.4-1.4z"/></svg><div class="t" style="left:59.00px;top:86.14px;font-size:4.20px;line-height:4.20px;color:#5f6368;transform-origin:0 0;transform:scaleX(0.9457);"><span style="font-weight:400;">File</span></div><div class="t" style="left:71.00px;top:86.14px;font-size:4.20px;line-height:4.20px;color:#5f6368;transform-origin:0 0;transform:scaleX(0.9672);"><span style="font-weight:400;">Edit</span></div><div class="t" style="left:84.40px;top:86.14px;font-size:4.20px;line-height:4.20px;color:#5f6368;transform-origin:0 0;transform:scaleX(1.0472);"><span style="font-weight:400;">Tampilan</span></div><div class="t" style="left:107.60px;top:86.14px;font-size:4.20px;line-height:4.20px;color:#5f6368;transform-origin:0 0;transform:scaleX(1.0331);"><span style="font-weight:400;">Sisipkan</span></div><div class="t" style="left:129.00px;top:86.14px;font-size:4.20px;line-height:4.20px;color:#5f6368;transform-origin:0 0;transform:scaleX(1.0902);"><span style="font-weight:400;">Format</span></div><div class="t" style="left:148.70px;top:86.14px;font-size:4.20px;line-height:4.20px;color:#5f6368;transform-origin:0 0;transform:scaleX(0.9356);"><span style="font-weight:400;">Data</span></div><div class="t" style="left:163.60px;top:86.14px;font-size:4.20px;line-height:4.20px;color:#5f6368;transform-origin:0 0;transform:scaleX(0.9534);"><span style="font-weight:400;">Alat</span></div><div class="t" style="left:177.00px;top:86.14px;font-size:4.20px;line-height:4.20px;color:#5f6368;transform-origin:0 0;transform:scaleX(1.0395);"><span style="font-weight:400;">Ekstensi</span></div><div class="t" style="left:199.00px;top:86.14px;font-size:4.20px;line-height:4.20px;color:#5f6368;transform-origin:0 0;transform:scaleX(1.0865);"><span style="font-weight:400;">Bantuan</span></div><div style="left:45.50px;top:93.00px;width:939.50px;height:13.00px;background:#edf2fa;border-radius:6px 0 0 6px"></div><div style="left:47.50px;top:95.00px;width:30.00px;height:8.80px;background:#fff;border-radius:4.5px"></div><div style="left:50.80px;top:97.30px;width:2.80px;height:2.80px;border:0.8px solid #444;border-radius:50%"></div><div style="left:53.20px;top:99.80px;width:1.60px;height:0.60px;background:#444;transform:rotate(45deg)"></div><div class="t" style="left:59.00px;top:97.93px;font-size:4.10px;line-height:4.10px;color:#777;transform-origin:0 0;transform:scaleX(1.0726);"><span style="font-weight:400;">Menu</span></div><svg style="position:absolute;left:81.00px;top:97.10px;width:4.60px;height:4.60px;" viewBox="0 0 24 24"><path fill="#5f6368" d="M12.5 8c-2.65 0-5.05.99-6.9 2.6L2 7v9h9l-3.62-3.62c1.39-1.16 3.16-1.88 5.12-1.88 3.54 0 6.55 2.31 7.6 5.5l2.37-.78C21.08 11.03 17.15 8 12.5 8z"/></svg><svg style="position:absolute;left:91.00px;top:97.10px;width:4.60px;height:4.60px;" viewBox="0 0 24 24"><path fill="#5f6368" d="M18.4 10.6C16.55 8.99 14.15 8 11.5 8c-4.65 0-8.58 3.03-9.96 7.22L3.9 16c1.05-3.19 4.05-5.5 7.6-5.5 1.95 0 3.73.72 5.12 1.88L13 16h9V7l-3.6 3.6z"/></svg><svg style="position:absolute;left:101.40px;top:96.60px;width:5.40px;height:5.40px;" viewBox="0 0 24 24"><path fill="#5f6368" d="M19 8H5c-1.66 0-3 1.34-3 3v6h4v4h12v-4h4v-6c0-1.66-1.34-3-3-3zm-3 11H8v-5h8v5zm3-7c-.55 0-1-.45-1-1s.45-1 1-1 1 .45 1 1-.45 1-1 1zm-1-9H6v4h12V3z"/></svg><svg style="position:absolute;left:111.30px;top:96.80px;width:5.40px;height:5.40px;" viewBox="0 0 24 24"><path fill="#5f6368" d="M18 4V3c0-.55-.45-1-1-1H5c-.55 0-1 .45-1 1v4c0 .55.45 1 1 1h12c.55 0 1-.45 1-1V6h1v4H9v11c0 .55.45 1 1 1h2c.55 0 1-.45 1-1v-9h8V4h-3z"/></svg><div class="t" style="left:123.10px;top:98.31px;font-size:4.00px;line-height:4.00px;color:#666;transform-origin:0 0;transform:scaleX(1.0362);"><span style="font-weight:400;">100%</span></div><svg style="position:absolute;left:134.26px;top:96.07px;width:6.67px;height:6.67px;" viewBox="0 0 24 24"><path fill="#4a4d52" d="M7 10l5 5 5-5z"/></svg><div style="left:144.30px;top:96.60px;width:0.50px;height:5.80px;background:#c7c7c7"></div><div style="left:199.80px;top:96.60px;width:0.50px;height:5.80px;background:#c7c7c7"></div><svg style="position:absolute;left:222.66px;top:96.07px;width:6.67px;height:6.67px;" viewBox="0 0 24 24"><path fill="#4a4d52" d="M7 10l5 5 5-5z"/></svg><div style="left:232.40px;top:96.60px;width:0.50px;height:5.80px;background:#c7c7c7"></div><svg style="position:absolute;left:235.50px;top:97.30px;width:4.20px;height:4.20px;" viewBox="0 0 24 24"><path fill="#4a4d52" d="M19 13H5v-2h14v2z"/></svg><div style="left:242.50px;top:96.00px;width:10.10px;height:7.40px;border:0.8px solid #80868b;border-radius:1px"></div><div class="t" style="left:245.20px;top:98.78px;font-size:3.80px;line-height:3.80px;color:#444;transform-origin:0 0;transform:scaleX(1.1831);"><span style="font-weight:400;">10</span></div><svg style="position:absolute;left:255.50px;top:97.30px;width:4.20px;height:4.20px;" viewBox="0 0 24 24"><path fill="#4a4d52" d="M19 13h-6v6h-2v-6H5v-2h6V5h2v6h6v2z"/></svg><div style="left:263.60px;top:96.60px;width:0.50px;height:5.80px;background:#c7c7c7"></div><svg style="position:absolute;left:267.00px;top:97.00px;width:4.80px;height:4.80px;" viewBox="0 0 24 24"><path fill="#4a4d52" d="M15.6 10.79c.97-.67 1.65-1.77 1.65-2.79 0-2.26-1.75-4-4-4H7v14h7.04c2.09 0 3.71-1.7 3.71-3.79 0-1.52-.86-2.82-2.15-3.42zM10 6.5h3c.83 0 1.5.67 1.5 1.5s-.67 1.5-1.5 1.5h-3v-3zm3.5 9H10v-3h3.5c.83 0 1.5.67 1.5 1.5s-.67 1.5-1.5 1.5z"/></svg><svg style="position:absolute;left:277.30px;top:97.10px;width:4.60px;height:4.60px;" viewBox="0 0 24 24"><path fill="#4a4d52" d="M10 4v3h2.21l-3.42 8H6v3h8v-3h-2.21l3.42-8H18V4z"/></svg><svg style="position:absolute;left:288.10px;top:97.10px;width:4.60px;height:4.60px;" viewBox="0 0 24 24"><path fill="#4a4d52" d="M10 19h4v-3h-4v3zM5 4v3h5v3h4V7h5V4H5zM3 14h18v-2H3v2z"/></svg><svg style="position:absolute;left:298.30px;top:96.30px;width:4.60px;height:4.60px;" viewBox="0 0 24 24"><path fill="#4a4d52" d="M5.49 17h2.42l1.27-3.58h5.65L16.09 17h2.42L13.25 3h-2.5L5.49 17zm4.42-5.61l2.03-5.79h.12l2.03 5.79H9.91z"/></svg><div style="left:297.00px;top:101.50px;width:7.20px;height:1.10px;background:#111"></div><div style="left:307.40px;top:96.60px;width:0.50px;height:5.80px;background:#c7c7c7"></div><svg style="position:absolute;left:311.20px;top:96.40px;width:4.80px;height:4.80px;" viewBox="0 0 24 24"><path fill="#4a4d52" d="M16.56 8.94L7.62 0 6.21 1.41l2.38 2.38-5.15 5.15c-.59.59-.59 1.54 0 2.12l5.5 5.5c.29.29.68.44 1.06.44s.77-.15 1.06-.44l5.5-5.5c.59-.58.59-1.53 0-2.12zM5.21 10L10 5.21 14.79 10H5.21zM19 11.5s-2 2.17-2 3.5c0 1.1.9 2 2 2s2-.9 2-2c0-1.33-2-3.5-2-3.5z"/></svg><svg style="position:absolute;left:322.70px;top:97.10px;width:4.60px;height:4.60px;" viewBox="0 0 24 24"><path fill="#4a4d52" d="M3 3v18h18V3H3zm8 16H5v-6h6v6zm0-8H5V5h6v6zm8 8h-6v-6h6v6zm0-8h-6V5h6v6z"/></svg><svg style="position:absolute;left:333.20px;top:97.10px;width:4.60px;height:4.60px;" viewBox="0 0 24 24"><path fill="#c4c7c5" d="M3 5h2v14H3zM19 5h2v14h-2zM7 11h4V8l4 4-4 4v-3H7z"/></svg><svg style="position:absolute;left:340.25px;top:96.65px;width:5.51px;height:5.51px;" viewBox="0 0 24 24"><path fill="#c4c7c5" d="M7 10l5 5 5-5z"/></svg><div style="left:346.40px;top:96.60px;width:0.50px;height:5.80px;background:#c7c7c7"></div><svg style="position:absolute;left:348.90px;top:97.10px;width:4.60px;height:4.60px;" viewBox="0 0 24 24"><path fill="#4a4d52" d="M15 15H3v2h12v-2zm0-8H3v2h12V7zM3 13h18v-2H3v2zm0 8h18v-2H3v2zM3 3v2h18V3H3z"/></svg><svg style="position:absolute;left:354.64px;top:96.65px;width:5.51px;height:5.51px;" viewBox="0 0 24 24"><path fill="#4a4d52" d="M7 10l5 5 5-5z"/></svg><svg style="position:absolute;left:362.50px;top:97.10px;width:4.60px;height:4.60px;" viewBox="0 0 24 24"><path fill="#4a4d52" d="M16 13h-3V3h-2v10H8l4 4 4-4zM4 19v2h16v-2H4z"/></svg><svg style="position:absolute;left:368.05px;top:96.65px;width:5.51px;height:5.51px;" viewBox="0 0 24 24"><path fill="#4a4d52" d="M7 10l5 5 5-5z"/></svg><svg style="position:absolute;left:375.50px;top:97.10px;width:4.60px;height:4.60px;" viewBox="0 0 24 24"><path fill="#4a4d52" d="M4 19h6v-2H4v2zM20 5H4v2h16V5zm-3 6H4v2h13.25c1.1 0 2 .9 2 2s-.9 2-2 2H15v-2l-3 3 3 3v-2h2c2.21 0 4-1.79 4-4s-1.79-4-4-4z"/></svg><svg style="position:absolute;left:381.25px;top:96.65px;width:5.51px;height:5.51px;" viewBox="0 0 24 24"><path fill="#4a4d52" d="M7 10l5 5 5-5z"/></svg><svg style="position:absolute;left:388.70px;top:97.10px;width:4.60px;height:4.60px;" viewBox="0 0 24 24"><path fill="#4a4d52" d="M5.49 17h2.42l1.27-3.58h5.65L16.09 17h2.42L13.25 3h-2.5L5.49 17zm4.42-5.61l2.03-5.79h.12l2.03 5.79H9.91z"/></svg><svg style="position:absolute;left:394.25px;top:96.65px;width:5.51px;height:5.51px;" viewBox="0 0 24 24"><path fill="#4a4d52" d="M7 10l5 5 5-5z"/></svg><div style="left:401.50px;top:96.60px;width:0.50px;height:5.80px;background:#c7c7c7"></div><svg style="position:absolute;left:405.60px;top:97.00px;width:4.80px;height:4.80px;" viewBox="0 0 24 24"><path fill="#4a4d52" d="M3.9 12c0-1.71 1.39-3.1 3.1-3.1h4V7H7c-2.76 0-5 2.24-5 5s2.24 5 5 5h4v-1.9H7c-1.71 0-3.1-1.39-3.1-3.1zM8 13h8v-2H8v2zm9-6h-4v1.9h4c1.71 0 3.1 1.39 3.1 3.1s-1.39 3.1-3.1 3.1h-4V17h4c2.76 0 5-2.24 5-5s-2.24-5-5-5z"/></svg><svg style="position:absolute;left:415.90px;top:97.10px;width:4.60px;height:4.60px;" viewBox="0 0 24 24"><path fill="#4a4d52" d="M20 2H4c-1.1 0-2 .9-2 2v18l4-4h14c1.1 0 2-.9 2-2V4c0-1.1-.9-2-2-2zm0 14H6l-2 2V4h16v12zM11 6h2v3h3v2h-3v3h-2v-3H8V9h3z"/></svg><svg style="position:absolute;left:426.30px;top:97.10px;width:4.60px;height:4.60px;" viewBox="0 0 24 24"><path fill="#4a4d52" d="M19 3H5c-1.1 0-2 .9-2 2v14c0 1.1.9 2 2 2h14c1.1 0 2-.9 2-2V5c0-1.1-.9-2-2-2zm0 16H5V5h14v14zM7 10h2v7H7zm4-3h2v10h-2zm4 6h2v4h-2z"/></svg><svg style="position:absolute;left:436.70px;top:97.10px;width:4.60px;height:4.60px;" viewBox="0 0 24 24"><path fill="#4a4d52" d="M4.25 5.61C6.27 8.2 10 13 10 13v6c0 .55.45 1 1 1h2c.55 0 1-.45 1-1v-6s3.72-4.8 5.74-7.39c.51-.66.04-1.61-.79-1.61H5.04c-.83 0-1.3.95-.79 1.61z"/></svg><svg style="position:absolute;left:445.70px;top:97.10px;width:4.60px;height:4.60px;" viewBox="0 0 24 24"><path fill="#4a4d52" d="M3 3h18v18H3V3zm2 2v14h14V5H5zm2 2h10v2H7zm0 4h10v2H7zm0 4h6v2H7z"/></svg><svg style="position:absolute;left:451.25px;top:96.65px;width:5.51px;height:5.51px;" viewBox="0 0 24 24"><path fill="#4a4d52" d="M7 10l5 5 5-5z"/></svg><svg style="position:absolute;left:458.70px;top:97.10px;width:4.60px;height:4.60px;" viewBox="0 0 24 24"><path fill="#4a4d52" d="M18 4H6v2l6.5 6L6 18v2h12v-3h-7l5-5-5-5h7z"/></svg><div class="t" style="left:148.30px;top:98.78px;font-size:3.80px;line-height:3.80px;color:#888;transform-origin:0 0;transform:scaleX(1.1117);"><span style="font-weight:400;">Rp</span></div><div class="t" style="left:159.30px;top:98.78px;font-size:3.80px;line-height:3.80px;color:#888;transform-origin:0 0;transform:scaleX(1.0000);"><span style="font-weight:400;">%</span></div><div class="t" style="left:167.80px;top:98.58px;font-size:3.80px;line-height:3.80px;color:#666;transform-origin:0 0;transform:scaleX(1.0000);"><span style="font-weight:400;">.0</span></div><svg style="position:absolute;left:170.90px;top:100.10px;width:2.60px;height:2.60px;" viewBox="0 0 24 24"><path fill="#666" d="M20 11H7.83l5.59-5.59L12 4l-8 8 8 8 1.41-1.41L7.83 13H20v-2z"/></svg><div class="t" style="left:178.60px;top:98.92px;font-size:3.40px;line-height:3.40px;color:#666;transform-origin:0 0;transform:scaleX(1.0000);"><span style="font-weight:400;">.00</span></div><svg style="position:absolute;left:183.30px;top:100.10px;width:2.60px;height:2.60px;" viewBox="0 0 24 24"><path fill="#666" d="M12 4l-1.41 1.41L16.17 11H4v2h12.17l-5.58 5.59L12 20l8-8z"/></svg><div class="t" style="left:189.80px;top:99.12px;font-size:3.40px;line-height:3.40px;color:#888;transform-origin:0 0;transform:scaleX(0.9168);"><span style="font-weight:400;">123</span></div><div class="t" style="left:205.00px;top:98.78px;font-size:3.80px;line-height:3.80px;color:#777;transform-origin:0 0;transform:scaleX(1.1836);"><span style="font-weight:400;">Nunito</span></div><div class="t" style="left:43.40px;top:110.01px;font-size:4.00px;line-height:4.00px;color:#888;transform-origin:0 0;transform:scaleX(1.0284);"><span style="font-weight:400;">F8</span></div><div class="t" style="left:65.60px;top:110.01px;font-size:4.00px;line-height:4.00px;color:#5f6368;transform-origin:0 0;transform:scaleX(1.0000);"><span style="font-weight:400;">▾</span></div><div style="left:72.30px;top:108.30px;width:0.50px;height:7.30px;background:#c7c7c7"></div><div class="t" style="left:76.00px;top:109.88px;font-size:4.40px;line-height:4.40px;color:#aaa;transform-origin:0 0;transform:scaleX(1.0000);"><span style="font-weight:400;font-style:italic">fx</span></div><svg style="position:absolute;left:55.90px;top:610.90px;width:5.00px;height:5.00px;" viewBox="0 0 24 24"><path fill="#444" d="M19 13h-6v6h-2v-6H5v-2h6V5h2v6h6v2z"/></svg><svg style="position:absolute;left:68.70px;top:610.90px;width:5.00px;height:5.00px;" viewBox="0 0 24 24"><path fill="#444" d="M3 18h18v-2H3v2zm0-5h18v-2H3v2zm0-7v2h18V6H3z"/></svg><div class="t" style="left:85.00px;top:612.81px;font-size:4.00px;line-height:4.00px;color:#444;transform-origin:0 0;transform:scaleX(1.1830);"><span style="font-weight:400;">Prompt Bersama</span></div><svg style="position:absolute;left:121.81px;top:611.01px;width:6.38px;height:6.38px;" viewBox="0 0 24 24"><path fill="#444" d="M7 10l5 5 5-5z"/></svg><div style="left:131.00px;top:608.30px;width:36.80px;height:10.30px;background:#e1e9f7"></div><div class="t" style="left:135.00px;top:612.81px;font-size:4.00px;line-height:4.00px;color:#0b57d0;transform-origin:0 0;transform:scaleX(1.2103);"><span style="font-weight:400;">Parameter</span></div><svg style="position:absolute;left:158.41px;top:611.01px;width:6.38px;height:6.38px;" viewBox="0 0 24 24"><path fill="#0b57d0" d="M7 10l5 5 5-5z"/></svg></div></body></html>
